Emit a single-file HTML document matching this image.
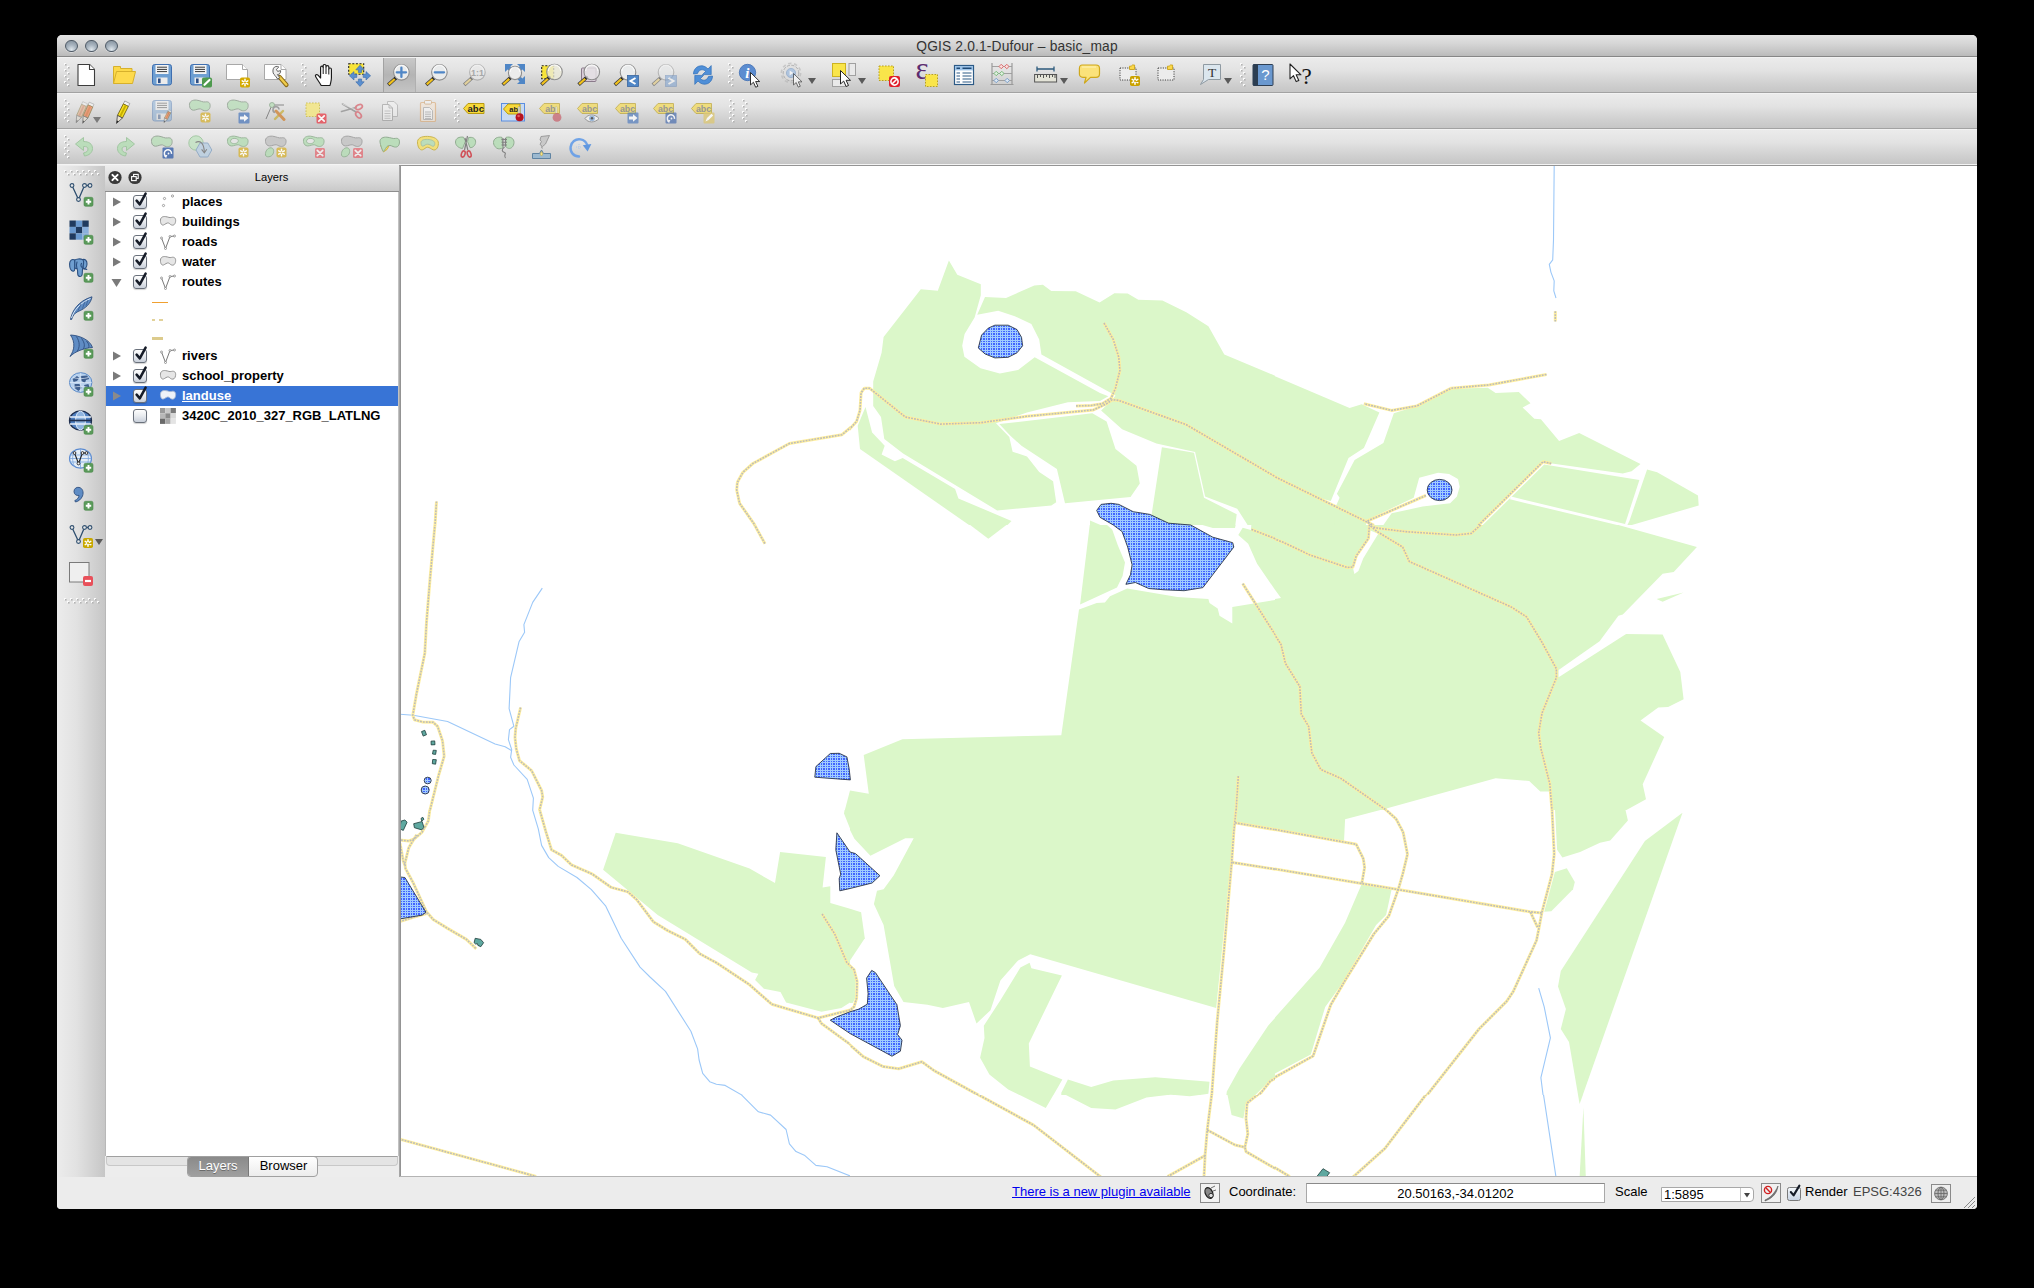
<!DOCTYPE html><html><head><meta charset="utf-8"><title>QGIS</title><style>
html,body{margin:0;padding:0;background:#000;}
body{width:2034px;height:1288px;position:relative;overflow:hidden;font-family:"Liberation Sans",sans-serif;font-size:13px;color:#000;}
#win{position:absolute;left:57px;top:35px;width:1920px;height:1174px;background:#ededed;border-radius:5px 5px 4px 4px;overflow:hidden;}
#title{position:absolute;left:0;top:0;width:1920px;height:21px;background:linear-gradient(#e4e4e4,#d6d6d6 40%,#c2c2c2 85%,#bababa);border-bottom:1px solid #868686;text-align:center;}
#title span{position:absolute;left:0;width:1920px;top:3.5px;font-size:13.8px;color:#333;letter-spacing:0.15px}
.tl{position:absolute;top:4.5px;width:10.5px;height:10.5px;border-radius:50%;border:1.2px solid #4f5a66;background:radial-gradient(circle at 50% 85%,#dfe6ec 0%,#a9b5c0 45%,#7f8c99 100%);box-shadow:0 0.5px 0.5px rgba(255,255,255,.7)}
.tb{position:absolute;left:0;width:1920px;height:34px;background:linear-gradient(#ebebeb,#e3e3e3 35%,#d0d0d0 75%,#c6c6c6);border-top:1px solid #f2f2f2;border-bottom:1px solid #a2a2a2;box-sizing:content-box}
#ltb{position:absolute;left:0;top:131px;width:48px;height:1011px;background:linear-gradient(90deg,#ececec,#e2e2e2 40%,#c6c6c6)}
#lp{position:absolute;left:48px;top:131px;width:294px;height:1011px;background:#ededed}
#lph{position:absolute;left:0;top:0px;width:294px;height:26px;background:linear-gradient(#ececec,#dcdcdc 50%,#c9c9c9);border-bottom:1px solid #8e8e8e;box-sizing:border-box}
#lph span{position:absolute;left:0;width:333px;text-align:center;top:5px;font-size:11.2px}
#ll{position:absolute;left:0;top:26px;width:294px;height:964px;background:#fff;border-left:1px solid #b8b8b8;border-right:1px solid #c2c2c2;box-sizing:border-box}
.row{position:absolute;left:0px;width:292px;height:20px;font-weight:bold;font-size:13px;line-height:20px;white-space:nowrap}
.row .t{position:absolute;left:76px;top:0}
.cb{position:absolute;left:27px;top:3px;width:12px;height:12px;border:1px solid #6a717c;border-radius:3px;background:linear-gradient(#fefefe,#e8ebef 50%,#c9d0da);box-shadow:0 1px 1px rgba(0,0,0,.18)}
#sb{position:absolute;left:0;top:1142px;width:1920px;height:32px;background:#ececec;font-size:13px}
#sb div,#sb span{position:absolute}
</style></head><body>
<div id="win">
<div id="title"><div class="tl" style="left:8px"></div><div class="tl" style="left:28px"></div><div class="tl" style="left:48px"></div><span>QGIS 2.0.1-Dufour &ndash; basic_map</span></div>
<div class="tb" style="top:22px"></div>
<div class="tb" style="top:58px"></div>
<div class="tb" style="top:94px;border-bottom-color:#f4f4f4"></div>
<svg style="position:absolute;left:7.0px;top:28.0px;overflow:visible" width="6" height="24" viewBox="0 0 6 24" ><rect x="0" y="0" width="2" height="2" fill="#fafafa"/><rect x="1" y="1" width="1.6" height="1.6" fill="#b4b4b4"/><rect x="3" y="3" width="2" height="2" fill="#fafafa"/><rect x="4" y="4" width="1.6" height="1.6" fill="#b4b4b4"/><rect x="0" y="6" width="2" height="2" fill="#fafafa"/><rect x="1" y="7" width="1.6" height="1.6" fill="#b4b4b4"/><rect x="3" y="9" width="2" height="2" fill="#fafafa"/><rect x="4" y="10" width="1.6" height="1.6" fill="#b4b4b4"/><rect x="0" y="12" width="2" height="2" fill="#fafafa"/><rect x="1" y="13" width="1.6" height="1.6" fill="#b4b4b4"/><rect x="3" y="15" width="2" height="2" fill="#fafafa"/><rect x="4" y="16" width="1.6" height="1.6" fill="#b4b4b4"/><rect x="0" y="18" width="2" height="2" fill="#fafafa"/><rect x="1" y="19" width="1.6" height="1.6" fill="#b4b4b4"/><rect x="3" y="21" width="2" height="2" fill="#fafafa"/><rect x="4" y="22" width="1.6" height="1.6" fill="#b4b4b4"/></svg>
<svg style="position:absolute;left:17.0px;top:28.0px;overflow:visible" width="24" height="24" viewBox="0 0 24 24" ><path d="M4 1.5H15.5L20.5 6.5V22.5H4Z" fill="#fff" stroke="#3c3c3c" stroke-width="1.1" stroke-linejoin="round"/><path d="M15.5 1.5V6.5H20.5" fill="#fff" stroke="#3c3c3c" stroke-width="1.1" stroke-linejoin="round"/></svg>
<svg style="position:absolute;left:55.0px;top:28.0px;overflow:visible" width="24" height="24" viewBox="0 0 24 24" ><path d="M1.5 20.5V3.5H8.5V5.5H20V8.5" fill="#fcd94a" stroke="#d6b02c" stroke-width="1"/><path d="M1.5 20.5L4.5 8.5H23.5L20.5 20.5Z" fill="#fdda4e" stroke="#d6b02c" stroke-width="1" stroke-linejoin="round"/></svg>
<svg style="position:absolute;left:93.0px;top:28.0px;overflow:visible" width="24" height="24" viewBox="0 0 24 24" ><g opacity="1"><rect x="2.5" y="1.5" width="19" height="20.5" rx="2.2" fill="#6e9fd2" stroke="#3f6fb0" stroke-width="1"/><rect x="5.5" y="2" width="13" height="9" fill="#f4f4f4"/><path d="M7 4.2H17M7 6.4H17M7 8.6H17" stroke="#3a3a3a" stroke-width="1"/><rect x="6.5" y="14.5" width="11" height="6.5" fill="#ececec"/><rect x="8" y="15.5" width="2.6" height="4.6" fill="#2d4f86"/></g></svg>
<svg style="position:absolute;left:131.0px;top:28.0px;overflow:visible" width="24" height="24" viewBox="0 0 24 24" ><g opacity="1"><rect x="2.5" y="1.5" width="19" height="20.5" rx="2.2" fill="#6e9fd2" stroke="#3f6fb0" stroke-width="1"/><rect x="5.5" y="2" width="13" height="9" fill="#f4f4f4"/><path d="M7 4.2H17M7 6.4H17M7 8.6H17" stroke="#3a3a3a" stroke-width="1"/><rect x="6.5" y="14.5" width="11" height="6.5" fill="#ececec"/><rect x="8" y="15.5" width="2.6" height="4.6" fill="#2d4f86"/></g><rect x="14" y="14.5" width="10" height="10" rx="1.8" fill="#4e9a4e"/><path d="M16.5 21.8L21.5 17" stroke="#fff" stroke-width="2.2" stroke-linecap="round"/></svg>
<svg style="position:absolute;left:169.0px;top:28.0px;overflow:visible" width="24" height="24" viewBox="0 0 24 24" ><path d="M0.5 1.5H16.5L21.5 6.5V16.5H0.5Z" fill="#fff" stroke="#a8a8a8" stroke-width="1"/><path d="M16.5 1.5V6.5H21.5" fill="#fff" stroke="#a8a8a8" stroke-width="1"/><g opacity="1"><rect x="14" y="14.5" width="10" height="10" rx="1.8" fill="#d4aa00"/><g stroke="#fff" stroke-width="1.5" stroke-linecap="round"><path d="M19 16.3V22.7M16.2 17.9L21.8 21.1M21.8 17.9L16.2 21.1"/></g><circle cx="19" cy="19.5" r="1" fill="#d4aa00"/></g></svg>
<svg style="position:absolute;left:207.0px;top:28.0px;overflow:visible" width="24" height="24" viewBox="0 0 24 24" ><path d="M0.5 1.5H17L22 6.5V16.5H0.5Z" fill="#fff" stroke="#a8a8a8" stroke-width="1"/><path d="M17 1.5V6.5H22" fill="#fff" stroke="#a8a8a8" stroke-width="1"/><path d="M15.5 14L22.5 22" stroke="#8a6a18" stroke-width="4.2" stroke-linecap="round"/><path d="M15.8 14.3L22.3 21.7" stroke="#f0cc4a" stroke-width="2.4" stroke-linecap="round"/><path d="M9.5 5.2C10.5 3.4 13 2.8 14.8 4L12.4 6.4L13.6 8.4L16.6 7.6C17 9.8 15.4 11.6 13.4 11.6L15.8 14.6L13.6 16L11 12.4C8.8 11.2 8.4 7.4 9.5 5.2Z" fill="#ececec" stroke="#555" stroke-width="0.9" stroke-linejoin="round"/></svg>
<svg style="position:absolute;left:244.0px;top:28.0px;overflow:visible" width="6" height="24" viewBox="0 0 6 24" ><rect x="0" y="0" width="2" height="2" fill="#fafafa"/><rect x="1" y="1" width="1.6" height="1.6" fill="#b4b4b4"/><rect x="3" y="3" width="2" height="2" fill="#fafafa"/><rect x="4" y="4" width="1.6" height="1.6" fill="#b4b4b4"/><rect x="0" y="6" width="2" height="2" fill="#fafafa"/><rect x="1" y="7" width="1.6" height="1.6" fill="#b4b4b4"/><rect x="3" y="9" width="2" height="2" fill="#fafafa"/><rect x="4" y="10" width="1.6" height="1.6" fill="#b4b4b4"/><rect x="0" y="12" width="2" height="2" fill="#fafafa"/><rect x="1" y="13" width="1.6" height="1.6" fill="#b4b4b4"/><rect x="3" y="15" width="2" height="2" fill="#fafafa"/><rect x="4" y="16" width="1.6" height="1.6" fill="#b4b4b4"/><rect x="0" y="18" width="2" height="2" fill="#fafafa"/><rect x="1" y="19" width="1.6" height="1.6" fill="#b4b4b4"/><rect x="3" y="21" width="2" height="2" fill="#fafafa"/><rect x="4" y="22" width="1.6" height="1.6" fill="#b4b4b4"/></svg>
<svg style="position:absolute;left:255.5px;top:28.0px;overflow:visible" width="24" height="24" viewBox="0 0 24 24" ><path d="M8.2 22.5C6.5 19.5 3.6 15.5 2.6 13.6C1.8 12 3.6 10.8 5 12.2L7.6 15V4.4C7.6 2.6 10.2 2.6 10.2 4.4V2.8C10.2 1 13 1 13 2.8V3.8C13 2.2 15.8 2.2 15.8 3.8V6C15.8 4.6 18.4 4.6 18.4 6.2V15C18.4 18 17.6 19.6 17 22.5Z" fill="#fff" stroke="#1a1a1a" stroke-width="1.15" stroke-linejoin="round"/><path d="M10.2 4.4V11M13 3.8V11M15.8 6V11.5" stroke="#1a1a1a" stroke-width="1"/></svg>
<svg style="position:absolute;left:291.0px;top:28.0px;overflow:visible" width="24" height="24" viewBox="0 0 24 24" ><rect x="0.7" y="0.7" width="15" height="10.6" fill="#f7e43a" stroke="#222" stroke-width="1.1" stroke-dasharray="2 1.6"/><g fill="#5a8fcf" stroke="#3a6aa8" stroke-width="0.6"><path d="M12 2.2L16.2 6.8H13.6V9.6H10.4V6.8H7.8Z"/><path d="M12 23.4L16.2 18.8H13.6V16H10.4V18.8H7.8Z"/><path d="M1.4 12.8L6 8.6V11.2H8.8V14.4H6V17Z"/><path d="M22.6 12.8L18 8.6V11.2H15.2V14.4H18V17Z"/></g></svg>
<div style="position:absolute;left:326px;top:23px;width:33px;height:34px;background:linear-gradient(#c9c9c9,#b4b4b4 50%,#c4c4c4);box-shadow:inset 1px 0 0 #a2a2a2,inset -1px 0 0 #b0b0b0"></div>
<svg style="position:absolute;left:330.0px;top:28.0px;overflow:visible" width="24" height="24" viewBox="0 0 24 24" ><g opacity="1"><path d="M9.384 14.516L1.184000000000001 21.916" stroke="#3a3a3a" stroke-width="3.6" stroke-linecap="butt"/><path d="M7.784000000000001 16.016000000000002L1.7840000000000007 21.416" stroke="#f2c21c" stroke-width="2.2" stroke-linecap="butt"/><circle cx="9.084000000000001" cy="14.716000000000001" r="1.7" fill="#1a1a1a"/><circle cx="14.4" cy="9.3" r="7.8" fill="#e9ebec" fill-opacity="1" stroke="#8e8e8e" stroke-width="1.1"/><path d="M8.200000000000001 8.3A6.199999999999999 6.199999999999999 0 0 1 20.599999999999998 8.3" fill="none" stroke="#fff" stroke-width="1.2" opacity=".8"/></g><path d="M14.4 4.7V13.9M9.8 9.3H19" stroke="#4f86c6" stroke-width="2.3" stroke-linecap="round"/></svg>
<svg style="position:absolute;left:368.0px;top:28.0px;overflow:visible" width="24" height="24" viewBox="0 0 24 24" ><g opacity="1"><path d="M9.384 14.516L1.184000000000001 21.916" stroke="#3a3a3a" stroke-width="3.6" stroke-linecap="butt"/><path d="M7.784000000000001 16.016000000000002L1.7840000000000007 21.416" stroke="#f2c21c" stroke-width="2.2" stroke-linecap="butt"/><circle cx="9.084000000000001" cy="14.716000000000001" r="1.7" fill="#1a1a1a"/><circle cx="14.4" cy="9.3" r="7.8" fill="#e9ebec" fill-opacity="1" stroke="#8e8e8e" stroke-width="1.1"/><path d="M8.200000000000001 8.3A6.199999999999999 6.199999999999999 0 0 1 20.599999999999998 8.3" fill="none" stroke="#fff" stroke-width="1.2" opacity=".8"/></g><path d="M9.8 9.3H19" stroke="#4f86c6" stroke-width="2.3" stroke-linecap="round"/></svg>
<svg style="position:absolute;left:406.0px;top:28.0px;overflow:visible" width="24" height="24" viewBox="0 0 24 24" ><g opacity="0.55"><path d="M9.384 14.516L1.184000000000001 21.916" stroke="#3a3a3a" stroke-width="3.6" stroke-linecap="butt"/><path d="M7.784000000000001 16.016000000000002L1.7840000000000007 21.416" stroke="#f0d070" stroke-width="2.2" stroke-linecap="butt"/><circle cx="9.084000000000001" cy="14.716000000000001" r="1.7" fill="#1a1a1a"/><circle cx="14.4" cy="9.3" r="7.8" fill="#ececec" fill-opacity="1" stroke="#8e8e8e" stroke-width="1.1"/><path d="M8.200000000000001 8.3A6.199999999999999 6.199999999999999 0 0 1 20.599999999999998 8.3" fill="none" stroke="#fff" stroke-width="1.2" opacity=".8"/></g><text x="14.4" y="12.6" text-anchor="middle" font-family="Liberation Sans" font-weight="bold" font-size="9" fill="#a8a8a8">1:1</text></svg>
<svg style="position:absolute;left:444.0px;top:28.0px;overflow:visible" width="24" height="24" viewBox="0 0 24 24" ><g fill="#4f86c6"><path d="M4 1H12L9.4 3.6L12.4 6.6L9.6 9.4L6.6 6.4L4 9Z"/><path d="M24 1V9L21.4 6.4L18.4 9.4L15.6 6.6L18.6 3.6L16 1Z"/><path d="M24 21H16L18.6 18.4L15.6 15.4L18.4 12.6L21.4 15.6L24 13Z"/></g><g opacity="1"><path d="M9.848 14.351999999999999L1.6480000000000015 21.752" stroke="#3a3a3a" stroke-width="3.6" stroke-linecap="butt"/><path d="M8.248000000000001 15.851999999999999L2.248000000000001 21.252" stroke="#f2c21c" stroke-width="2.2" stroke-linecap="butt"/><circle cx="9.548000000000002" cy="14.552" r="1.7" fill="#1a1a1a"/><circle cx="14" cy="10" r="6.6" fill="#ececec" fill-opacity="1" stroke="#8e8e8e" stroke-width="1.1"/><path d="M9.0 9A5.0 5.0 0 0 1 19.0 9" fill="none" stroke="#fff" stroke-width="1.2" opacity=".8"/></g></svg>
<svg style="position:absolute;left:482.0px;top:28.0px;overflow:visible" width="24" height="24" viewBox="0 0 24 24" ><rect x="2.7" y="2.7" width="12" height="13" fill="#f7e43a" stroke="#222" stroke-width="1.1" stroke-dasharray="2 1.6"/><g opacity="1"><path d="M10.484 14.216L2.2840000000000007 21.616" stroke="#3a3a3a" stroke-width="3.6" stroke-linecap="butt"/><path d="M8.884 15.716L2.8840000000000003 21.116" stroke="#f2c21c" stroke-width="2.2" stroke-linecap="butt"/><circle cx="10.184000000000001" cy="14.416" r="1.7" fill="#1a1a1a"/><circle cx="15.5" cy="9" r="7.8" fill="#ecead8" fill-opacity="0.78" stroke="#8e8e8e" stroke-width="1.1"/><path d="M9.3 8A6.199999999999999 6.199999999999999 0 0 1 21.7 8" fill="none" stroke="#fff" stroke-width="1.2" opacity=".8"/></g></svg>
<svg style="position:absolute;left:520.0px;top:28.0px;overflow:visible" width="24" height="24" viewBox="0 0 24 24" ><rect x="4.5" y="5" width="14.5" height="13.5" rx="1" fill="#d8ccd8" stroke="#8a7a8a" stroke-width="1"/><g opacity="1"><path d="M9.784 14.216L1.5840000000000014 21.616" stroke="#3a3a3a" stroke-width="3.6" stroke-linecap="butt"/><path d="M8.184000000000001 15.716L2.184000000000001 21.116" stroke="#f2c21c" stroke-width="2.2" stroke-linecap="butt"/><circle cx="9.484000000000002" cy="14.416" r="1.7" fill="#1a1a1a"/><circle cx="14.8" cy="9" r="7.8" fill="#e6e2e6" fill-opacity="0.8" stroke="#8e8e8e" stroke-width="1.1"/><path d="M8.600000000000001 8A6.199999999999999 6.199999999999999 0 0 1 21.0 8" fill="none" stroke="#fff" stroke-width="1.2" opacity=".8"/></g></svg>
<svg style="position:absolute;left:558.0px;top:28.0px;overflow:visible" width="24" height="24" viewBox="0 0 24 24" ><g opacity="1"><path d="M7.984 14.516L-0.2159999999999993 21.916" stroke="#3a3a3a" stroke-width="3.6" stroke-linecap="butt"/><path d="M6.384 16.016000000000002L0.38400000000000034 21.416" stroke="#f2c21c" stroke-width="2.2" stroke-linecap="butt"/><circle cx="7.684" cy="14.716000000000001" r="1.7" fill="#1a1a1a"/><circle cx="13" cy="9.3" r="7.8" fill="#e9ebec" fill-opacity="1" stroke="#8e8e8e" stroke-width="1.1"/><path d="M6.800000000000001 8.3A6.199999999999999 6.199999999999999 0 0 1 19.2 8.3" fill="none" stroke="#fff" stroke-width="1.2" opacity=".8"/></g><rect x="12.5" y="12.5" width="11" height="11" fill="#4f86c6" stroke="#3a66a0" stroke-width="0.8"/><path d="M20.5 15L15.5 18L20.5 21" fill="none" stroke="#fff" stroke-width="2"/></svg>
<svg style="position:absolute;left:596.0px;top:28.0px;overflow:visible" width="24" height="24" viewBox="0 0 24 24" ><g opacity="0.5"><path d="M7.984 14.516L-0.2159999999999993 21.916" stroke="#3a3a3a" stroke-width="3.6" stroke-linecap="butt"/><path d="M6.384 16.016000000000002L0.38400000000000034 21.416" stroke="#f0d070" stroke-width="2.2" stroke-linecap="butt"/><circle cx="7.684" cy="14.716000000000001" r="1.7" fill="#1a1a1a"/><circle cx="13" cy="9.3" r="7.8" fill="#e9ebec" fill-opacity="1" stroke="#8e8e8e" stroke-width="1.1"/><path d="M6.800000000000001 8.3A6.199999999999999 6.199999999999999 0 0 1 19.2 8.3" fill="none" stroke="#fff" stroke-width="1.2" opacity=".8"/></g><g opacity=".55"><rect x="12.5" y="12.5" width="11" height="11" fill="#7ea4d4" stroke="#6a8ab8" stroke-width="0.8"/><path d="M15.5 15L20.5 18L15.5 21" fill="none" stroke="#fff" stroke-width="2"/></g></svg>
<svg style="position:absolute;left:634.0px;top:28.0px;overflow:visible" width="24" height="24" viewBox="0 0 24 24" ><path d="M2.5 11C2.5 5 8 1.5 13 3.2C14.8 3.8 16 4.8 17 6L20.2 2.6V11.6H11.4L14.6 8.4C12.6 6 8 6 6.6 10.4Z" fill="#4f8fd8" stroke="#2f6fb8" stroke-width="0.7" stroke-linejoin="round"/><path d="M21.5 13C21.5 19 16 22.5 11 20.8C9.2 20.2 8 19.2 7 18L3.8 21.4V12.4H12.6L9.4 15.6C11.4 18 16 18 17.4 13.6Z" fill="#4f8fd8" stroke="#2f6fb8" stroke-width="0.7" stroke-linejoin="round"/></svg>
<svg style="position:absolute;left:671.0px;top:28.0px;overflow:visible" width="6" height="24" viewBox="0 0 6 24" ><rect x="0" y="0" width="2" height="2" fill="#fafafa"/><rect x="1" y="1" width="1.6" height="1.6" fill="#b4b4b4"/><rect x="3" y="3" width="2" height="2" fill="#fafafa"/><rect x="4" y="4" width="1.6" height="1.6" fill="#b4b4b4"/><rect x="0" y="6" width="2" height="2" fill="#fafafa"/><rect x="1" y="7" width="1.6" height="1.6" fill="#b4b4b4"/><rect x="3" y="9" width="2" height="2" fill="#fafafa"/><rect x="4" y="10" width="1.6" height="1.6" fill="#b4b4b4"/><rect x="0" y="12" width="2" height="2" fill="#fafafa"/><rect x="1" y="13" width="1.6" height="1.6" fill="#b4b4b4"/><rect x="3" y="15" width="2" height="2" fill="#fafafa"/><rect x="4" y="16" width="1.6" height="1.6" fill="#b4b4b4"/><rect x="0" y="18" width="2" height="2" fill="#fafafa"/><rect x="1" y="19" width="1.6" height="1.6" fill="#b4b4b4"/><rect x="3" y="21" width="2" height="2" fill="#fafafa"/><rect x="4" y="22" width="1.6" height="1.6" fill="#b4b4b4"/></svg>
<svg style="position:absolute;left:681.0px;top:28.0px;overflow:visible" width="24" height="24" viewBox="0 0 24 24" ><circle cx="9.5" cy="9.5" r="8.2" fill="#5b8cd0" stroke="#3f6fb4" stroke-width="0.8"/><text x="9.3" y="14.6" text-anchor="middle" font-family="Liberation Serif" font-style="italic" font-weight="bold" font-size="15" fill="#fff">i</text><path transform="translate(12.5,9.5) scale(0.92)" d="M0 0V13.5L3.2 10.6L5.6 16L8 15L5.6 9.8H10Z" fill="#fff" stroke="#222" stroke-width="1" stroke-linejoin="round"/></svg>
<svg style="position:absolute;left:724.0px;top:28.0px;overflow:visible" width="24" height="24" viewBox="0 0 24 24" ><g opacity=".6"><circle cx="10" cy="10" r="7.8" fill="#dedede" stroke="#8c8c8c" stroke-width="1" stroke-dasharray="3.2 1.4"/><circle cx="10" cy="10" r="9.6" fill="none" stroke="#b5b5b5" stroke-width="1.6" stroke-dasharray="3.4 2.6"/><circle cx="10" cy="10" r="4.6" fill="#8fb3de" stroke="#6a8fc0" stroke-width="0.8"/><path d="M8.6 7.6L12.4 10L8.6 12.4Z" fill="#fff"/></g><g opacity=".7"><path transform="translate(12.5,10.5) scale(0.85)" d="M0 0V13.5L3.2 10.6L5.6 16L8 15L5.6 9.8H10Z" fill="#fff" stroke="#222" stroke-width="1" stroke-linejoin="round"/></g></svg>
<svg style="position:absolute;left:751.0px;top:43.0px;overflow:visible" width="8" height="6" viewBox="0 0 8 6" ><path d="M0 0H8L4 6Z" fill="#5a5a5a"/></svg>
<svg style="position:absolute;left:775.0px;top:28.0px;overflow:visible" width="24" height="24" viewBox="0 0 24 24" ><rect x="0.5" y="16.5" width="13" height="7" fill="#e9e9e9" stroke="#a0a0a0" stroke-width="1"/><rect x="17" y="0.5" width="6.5" height="12" fill="#e9e9e9" stroke="#a0a0a0" stroke-width="1"/><rect x="0.5" y="0.5" width="13" height="13" fill="#f9e54a" stroke="#cdb320" stroke-width="1"/><path transform="translate(8.5,7.5) scale(1.0)" d="M0 0V13.5L3.2 10.6L5.6 16L8 15L5.6 9.8H10Z" fill="#fff" stroke="#222" stroke-width="1" stroke-linejoin="round"/></svg>
<svg style="position:absolute;left:801.0px;top:43.0px;overflow:visible" width="8" height="6" viewBox="0 0 8 6" ><path d="M0 0H8L4 6Z" fill="#5a5a5a"/></svg>
<svg style="position:absolute;left:820.0px;top:28.0px;overflow:visible" width="24" height="24" viewBox="0 0 24 24" ><rect x="2" y="3" width="14.5" height="14.5" fill="#f9e54a" stroke="#b8a020" stroke-width="1" stroke-dasharray="1.6 1.4"/><rect x="12" y="13" width="11" height="11" rx="2" fill="#e0202c"/><circle cx="17.5" cy="18.5" r="3.6" fill="none" stroke="#fff" stroke-width="1.6"/><path d="M15 21L20 16" stroke="#fff" stroke-width="1.6"/></svg>
<svg style="position:absolute;left:858.0px;top:28.0px;overflow:visible" width="24" height="24" viewBox="0 0 24 24" ><text x="7" y="15.8" text-anchor="middle" font-family="Liberation Serif" font-size="31" fill="#5c2d70">&#949;</text><rect x="10.5" y="11.5" width="12" height="12" fill="#f9e54a" stroke="#b8a020" stroke-width="1" stroke-dasharray="1.6 1.4"/></svg>
<svg style="position:absolute;left:895.0px;top:28.0px;overflow:visible" width="24" height="24" viewBox="0 0 24 24" ><rect x="2.5" y="2.5" width="19" height="19" fill="#fff" stroke="#2c5a86" stroke-width="1.2"/><rect x="3" y="3" width="18" height="4.4" fill="#9dc3e8"/><path d="M4.5 5.2H8M10.5 5.2H19.5" stroke="#1f4a76" stroke-width="1.5"/><path d="M4.5 10H8M10.5 10H19.5M4.5 13H8M10.5 13H19.5M4.5 16H8M10.5 16H19.5M4.5 19H8M10.5 19H19.5" stroke="#2c5a86" stroke-width="1.1"/></svg>
<svg style="position:absolute;left:933.0px;top:27.0px;overflow:visible" width="24" height="24" viewBox="0 0 24 24" ><path d="M2 1V22M22 1V22M0.5 22.5H23.5" stroke="#9a9a9a" stroke-width="1.2" fill="none"/><path d="M2 4.5H22M2 11.5H22M2 18.5H22" stroke="#9a9a9a" stroke-width="0.9"/><g stroke-width="1" fill="#fbe0e0" stroke="#d86a6a"><path d="M9 4.5L11.2 2.3L13.4 4.5L11.2 6.7Z"/><path d="M14.6 4.5L16.8 2.3L19 4.5L16.8 6.7Z"/></g><g stroke-width="1" fill="#dff0df" stroke="#7ab87a"><path d="M4 11.5L6.2 9.3L8.4 11.5L6.2 13.7Z"/><path d="M9.6 11.5L11.8 9.3L14 11.5L11.8 13.7Z"/></g><g stroke-width="1" fill="#dde8f4" stroke="#7a9ec8"><path d="M4 18.5L6.2 16.3L8.4 18.5L6.2 20.7Z"/><path d="M15 18.5L17.2 16.3L19.4 18.5L17.2 20.7Z"/></g></svg>
<svg style="position:absolute;left:977.0px;top:28.0px;overflow:visible" width="24" height="24" viewBox="0 0 24 24" ><path d="M3 3.5V8.5M20 3.5V8.5M3 6H20" stroke="#2c5a7c" stroke-width="1.3" fill="none"/><rect x="0.6" y="11.5" width="22" height="7.5" fill="#e4e4d8" stroke="#555" stroke-width="1"/><path d="M3.5 12V15M6.5 12V14M9.5 12V15M12.5 12V14M15.5 12V15M18.5 12V14M21 12V15" stroke="#444" stroke-width="0.9"/></svg>
<svg style="position:absolute;left:1003.0px;top:43.0px;overflow:visible" width="8" height="6" viewBox="0 0 8 6" ><path d="M0 0H8L4 6Z" fill="#5a5a5a"/></svg>
<svg style="position:absolute;left:1021.0px;top:28.0px;overflow:visible" width="24" height="24" viewBox="0 0 24 24" ><path d="M4 2H18C20 2 21.5 3.4 21.5 5.4V11C21.5 13 20 14.4 18 14.4H12.5L6.5 20L8 14.4H4.8C2.8 14.4 1.4 13 1.4 11V5.4C1.4 3.4 2.8 2 4 2Z" fill="#fbe27a" stroke="#cfa81c" stroke-width="1.2" stroke-linejoin="round"/><path d="M4 4H18" stroke="#fff4b8" stroke-width="1.2"/></svg>
<svg style="position:absolute;left:1061.5px;top:28.0px;overflow:visible" width="24" height="24" viewBox="0 0 24 24" ><rect x="1" y="5" width="16" height="12" fill="#ececec" stroke="#3a3a3a" stroke-width="1" stroke-dasharray="1.1 1.3"/><path d="M10.5 6.5V3.2H12.2L13.4 2H15.6V6.5Z" fill="#fbd84a" stroke="#c8a218" stroke-width="0.9"/><g opacity="1"><rect x="11" y="13" width="10" height="10" rx="1.8" fill="#caa200"/><g stroke="#fff" stroke-width="1.5" stroke-linecap="round"><path d="M16 14.8V21.2M13.2 16.4L18.8 19.6M18.8 16.4L13.2 19.6"/></g><circle cx="16" cy="18" r="1" fill="#caa200"/></g></svg>
<svg style="position:absolute;left:1099.5px;top:28.0px;overflow:visible" width="24" height="24" viewBox="0 0 24 24" ><rect x="1" y="5" width="16" height="12" fill="#ececec" stroke="#3a3a3a" stroke-width="1" stroke-dasharray="1.1 1.3"/><path d="M10.5 6.5V3.2H12.2L13.4 2H15.6V6.5Z" fill="#fbd84a" stroke="#c8a218" stroke-width="0.9"/></svg>
<svg style="position:absolute;left:1142.0px;top:28.0px;overflow:visible" width="24" height="24" viewBox="0 0 24 24" ><path d="M4.5 1.5H21.5V16.5H9.5L1.5 21.5L4.5 16.5Z" fill="#dbe6ee" stroke="#8f9aa2" stroke-width="1" stroke-linejoin="round"/><text x="13" y="13.5" text-anchor="middle" font-family="Liberation Serif" font-size="13.5" fill="#333">T</text></svg>
<svg style="position:absolute;left:1167.0px;top:43.0px;overflow:visible" width="8" height="6" viewBox="0 0 8 6" ><path d="M0 0H8L4 6Z" fill="#5a5a5a"/></svg>
<svg style="position:absolute;left:1183.0px;top:28.0px;overflow:visible" width="6" height="24" viewBox="0 0 6 24" ><rect x="0" y="0" width="2" height="2" fill="#fafafa"/><rect x="1" y="1" width="1.6" height="1.6" fill="#b4b4b4"/><rect x="3" y="3" width="2" height="2" fill="#fafafa"/><rect x="4" y="4" width="1.6" height="1.6" fill="#b4b4b4"/><rect x="0" y="6" width="2" height="2" fill="#fafafa"/><rect x="1" y="7" width="1.6" height="1.6" fill="#b4b4b4"/><rect x="3" y="9" width="2" height="2" fill="#fafafa"/><rect x="4" y="10" width="1.6" height="1.6" fill="#b4b4b4"/><rect x="0" y="12" width="2" height="2" fill="#fafafa"/><rect x="1" y="13" width="1.6" height="1.6" fill="#b4b4b4"/><rect x="3" y="15" width="2" height="2" fill="#fafafa"/><rect x="4" y="16" width="1.6" height="1.6" fill="#b4b4b4"/><rect x="0" y="18" width="2" height="2" fill="#fafafa"/><rect x="1" y="19" width="1.6" height="1.6" fill="#b4b4b4"/><rect x="3" y="21" width="2" height="2" fill="#fafafa"/><rect x="4" y="22" width="1.6" height="1.6" fill="#b4b4b4"/></svg>
<svg style="position:absolute;left:1194.0px;top:28.0px;overflow:visible" width="24" height="24" viewBox="0 0 24 24" ><rect x="2" y="1.5" width="20" height="21" rx="1" fill="#6a98cf" stroke="#2e3e52" stroke-width="1"/><rect x="2" y="1.5" width="5" height="21" fill="#2c3e52"/><text x="14.5" y="17" text-anchor="middle" font-family="Liberation Sans" font-size="15" fill="#fff">?</text></svg>
<svg style="position:absolute;left:1232.0px;top:28.0px;overflow:visible" width="24" height="24" viewBox="0 0 24 24" ><path transform="translate(1,1) scale(1.1)" d="M0 0V13.5L3.2 10.6L5.6 16L8 15L5.6 9.8H10Z" fill="#fff" stroke="#222" stroke-width="1" stroke-linejoin="round"/><text x="17.5" y="21" text-anchor="middle" font-family="Liberation Serif" font-size="23" fill="#111">?</text></svg>
<svg style="position:absolute;left:7.0px;top:64.0px;overflow:visible" width="6" height="24" viewBox="0 0 6 24" ><rect x="0" y="0" width="2" height="2" fill="#fafafa"/><rect x="1" y="1" width="1.6" height="1.6" fill="#b4b4b4"/><rect x="3" y="3" width="2" height="2" fill="#fafafa"/><rect x="4" y="4" width="1.6" height="1.6" fill="#b4b4b4"/><rect x="0" y="6" width="2" height="2" fill="#fafafa"/><rect x="1" y="7" width="1.6" height="1.6" fill="#b4b4b4"/><rect x="3" y="9" width="2" height="2" fill="#fafafa"/><rect x="4" y="10" width="1.6" height="1.6" fill="#b4b4b4"/><rect x="0" y="12" width="2" height="2" fill="#fafafa"/><rect x="1" y="13" width="1.6" height="1.6" fill="#b4b4b4"/><rect x="3" y="15" width="2" height="2" fill="#fafafa"/><rect x="4" y="16" width="1.6" height="1.6" fill="#b4b4b4"/><rect x="0" y="18" width="2" height="2" fill="#fafafa"/><rect x="1" y="19" width="1.6" height="1.6" fill="#b4b4b4"/><rect x="3" y="21" width="2" height="2" fill="#fafafa"/><rect x="4" y="22" width="1.6" height="1.6" fill="#b4b4b4"/></svg>
<svg style="position:absolute;left:17.0px;top:64.0px;overflow:visible" width="24" height="24" viewBox="0 0 24 24" ><g transform="translate(3,22) rotate(24) scale(1.0)" opacity="0.45"><rect x="-2.6" y="-20" width="5.2" height="3" fill="#f4f4f4" stroke="#8a8a8a" stroke-width="0.6"/><rect x="-2.6" y="-17" width="5.2" height="12" fill="#e8a070" stroke="#6a5a10" stroke-width="0.7"/><rect x="-0.9" y="-17" width="1.8" height="12" fill="#d07040"/><path d="M-2.6 -5L0 2L2.6 -5Z" fill="#e8e0d0" stroke="#4a4a4a" stroke-width="0.7"/><path d="M-0.9 -0.6L0 2L0.9 -0.6Z" fill="#222"/></g><g transform="translate(9.5,22.5) rotate(24) scale(1.0)" opacity="0.65"><rect x="-2.6" y="-20" width="5.2" height="3" fill="#f4f4f4" stroke="#8a8a8a" stroke-width="0.6"/><rect x="-2.6" y="-17" width="5.2" height="12" fill="#f08050" stroke="#6a5a10" stroke-width="0.7"/><rect x="-0.9" y="-17" width="1.8" height="12" fill="#e06a2a"/><path d="M-2.6 -5L0 2L2.6 -5Z" fill="#e8e0d0" stroke="#4a4a4a" stroke-width="0.7"/><path d="M-0.9 -0.6L0 2L0.9 -0.6Z" fill="#222"/></g></svg>
<svg style="position:absolute;left:35.5px;top:81.5px;overflow:visible" width="8" height="6" viewBox="0 0 8 6" ><path d="M0 0H8L4 6Z" fill="#7a7a7a"/></svg>
<svg style="position:absolute;left:55.0px;top:64.0px;overflow:visible" width="24" height="24" viewBox="0 0 24 24" ><g transform="translate(5.5,22.5) rotate(27) scale(1.08)" opacity="1"><rect x="-2.6" y="-20" width="5.2" height="3" fill="#f4f4f4" stroke="#8a8a8a" stroke-width="0.6"/><rect x="-2.6" y="-17" width="5.2" height="12" fill="#f6e020" stroke="#6a5a10" stroke-width="0.7"/><rect x="-0.9" y="-17" width="1.8" height="12" fill="#c8b000"/><path d="M-2.6 -5L0 2L2.6 -5Z" fill="#e8e0d0" stroke="#4a4a4a" stroke-width="0.7"/><path d="M-0.9 -0.6L0 2L0.9 -0.6Z" fill="#222"/></g></svg>
<svg style="position:absolute;left:93.0px;top:64.0px;overflow:visible" width="24" height="24" viewBox="0 0 24 24" ><g opacity=".42"><g opacity="1"><rect x="2.5" y="1.5" width="19" height="20.5" rx="2.2" fill="#6e9fd2" stroke="#3f6fb0" stroke-width="1"/><rect x="5.5" y="2" width="13" height="9" fill="#f4f4f4"/><path d="M7 4.2H17M7 6.4H17M7 8.6H17" stroke="#3a3a3a" stroke-width="1"/><rect x="6.5" y="14.5" width="11" height="6.5" fill="#ececec"/><rect x="8" y="15.5" width="2.6" height="4.6" fill="#2d4f86"/></g></g><g transform="translate(14.5,22.5) rotate(27) scale(0.62)" opacity="0.7"><rect x="-2.6" y="-20" width="5.2" height="3" fill="#f4f4f4" stroke="#8a8a8a" stroke-width="0.6"/><rect x="-2.6" y="-17" width="5.2" height="12" fill="#f09060" stroke="#6a5a10" stroke-width="0.7"/><rect x="-0.9" y="-17" width="1.8" height="12" fill="#e07030"/><path d="M-2.6 -5L0 2L2.6 -5Z" fill="#e8e0d0" stroke="#4a4a4a" stroke-width="0.7"/><path d="M-0.9 -0.6L0 2L0.9 -0.6Z" fill="#222"/></g></svg>
<svg style="position:absolute;left:131.0px;top:64.0px;overflow:visible" width="24" height="24" viewBox="0 0 24 24" ><path transform="translate(0.5,0.5)" d="M1 6C0.5 2 4 0.2 8 0.6C12 1 14 3 17 2.4C20.5 1.8 22 4 21.6 7C21.2 10.4 18.5 11.6 16 11.2C13.5 10.8 13 9 10.5 9.4C8 9.8 5.5 11.4 3.5 10.4C1.6 9.5 1.2 8 1 6Z" fill="#b7ddb7" stroke="#8a9a8a" stroke-width="1" opacity="0.75"/><g opacity="0.85"><rect x="12.5" y="13.5" width="10" height="10" rx="1.8" fill="#d8b84a"/><g stroke="#fff" stroke-width="1.5" stroke-linecap="round"><path d="M17.5 15.3V21.7M14.7 16.9L20.3 20.1M20.3 16.9L14.7 20.1"/></g><circle cx="17.5" cy="18.5" r="1" fill="#d8b84a"/></g></svg>
<svg style="position:absolute;left:169.0px;top:64.0px;overflow:visible" width="24" height="24" viewBox="0 0 24 24" ><path transform="translate(0.5,0.5)" d="M1 6C0.5 2 4 0.2 8 0.6C12 1 14 3 17 2.4C20.5 1.8 22 4 21.6 7C21.2 10.4 18.5 11.6 16 11.2C13.5 10.8 13 9 10.5 9.4C8 9.8 5.5 11.4 3.5 10.4C1.6 9.5 1.2 8 1 6Z" fill="#b7ddb7" stroke="#8a9a8a" stroke-width="1" opacity="0.75"/><g opacity="0.8"><rect x="12.5" y="13.5" width="11" height="11" rx="1" fill="#5b83c0"/><path d="M14.0 17.5H18.0V15.3L22.5 19.0L18.0 22.7V20.5H14.0Z" fill="#fff"/></g></svg>
<svg style="position:absolute;left:207.0px;top:64.0px;overflow:visible" width="24" height="24" viewBox="0 0 24 24" ><g opacity=".75"><path d="M2 20L8 6H20" fill="none" stroke="#6a6a6a" stroke-width="1"/><circle cx="8" cy="6" r="2.5" fill="#b7ddb7" stroke="#7a9a7a" stroke-width="0.8"/><path d="M11 20L19 12" stroke="#c8b040" stroke-width="2.4" stroke-linecap="round"/><path d="M12 12L20 20.5" stroke="#d08030" stroke-width="3" stroke-linecap="round"/><path d="M11 13.5A3 3 0 1 1 15 10.5" fill="none" stroke="#8a8a8a" stroke-width="1.6"/></g></svg>
<svg style="position:absolute;left:246.5px;top:64.7px;overflow:visible" width="24" height="24" viewBox="0 0 24 24" ><rect x="2" y="3" width="13.5" height="13.5" fill="#f3e78a" stroke="#cdbf50" stroke-width="1" stroke-dasharray="1.6 1.4" opacity=".9"/><g opacity="0.85"><rect x="12.5" y="13.5" width="10" height="10" rx="1.5" fill="#e8505a"/><path d="M14.8 15.8L20.2 21.2M20.2 15.8L14.8 21.2" stroke="#fff" stroke-width="1.7" stroke-linecap="round"/></g></svg>
<svg style="position:absolute;left:283.0px;top:64.0px;overflow:visible" width="24" height="24" viewBox="0 0 24 24" ><g opacity=".7"><path d="M2.5 5L16 13M1.5 12.5L16 8.5" stroke="#8a8a8a" stroke-width="1.6" stroke-linecap="round"/><path d="M2.5 5L14 10" stroke="#e6e6e6" stroke-width="0.7"/><ellipse cx="19" cy="8" rx="3.6" ry="2.2" transform="rotate(-28 19 8)" fill="none" stroke="#d8606a" stroke-width="1.7"/><ellipse cx="18.5" cy="16" rx="3.4" ry="2.2" transform="rotate(48 18.5 16)" fill="none" stroke="#d8606a" stroke-width="1.7"/></g></svg>
<svg style="position:absolute;left:321.0px;top:64.0px;overflow:visible" width="24" height="24" viewBox="0 0 24 24" ><g opacity=".5"><path d="M9.5 2.5H16L19.5 6V17.5H9.5Z" fill="#f6f6f6" stroke="#9a9a9a" stroke-width="1"/><path d="M4.5 5.5H11L14.5 9V21.5H4.5Z" fill="#f8f8f8" stroke="#8a8a8a" stroke-width="1"/><path d="M11 5.5V9H14.5" fill="none" stroke="#8a8a8a" stroke-width="0.9"/><path d="M6.5 12H12.5M6.5 14.5H12.5M6.5 17H12.5M6.5 19.3H12.5" stroke="#aaa" stroke-width="1"/></g></svg>
<svg style="position:absolute;left:359.0px;top:64.0px;overflow:visible" width="24" height="24" viewBox="0 0 24 24" ><g opacity=".6"><rect x="4.5" y="3.5" width="15" height="19" rx="1" fill="#f4e6d6" stroke="#dca870" stroke-width="1.2"/><rect x="8.5" y="1.5" width="7" height="3.6" rx="1" fill="#f4f4f4" stroke="#c89860" stroke-width="0.9"/><path d="M7.5 8.5H13.5L16.5 11.5V20.5H7.5Z" fill="#fafafa" stroke="#9a9a9a" stroke-width="0.9"/><path d="M9 13H15M9 15.2H15M9 17.4H15M9 19.4H15" stroke="#999" stroke-width="0.9"/></g></svg>
<svg style="position:absolute;left:397.0px;top:64.0px;overflow:visible" width="6" height="24" viewBox="0 0 6 24" ><rect x="0" y="0" width="2" height="2" fill="#fafafa"/><rect x="1" y="1" width="1.6" height="1.6" fill="#b4b4b4"/><rect x="3" y="3" width="2" height="2" fill="#fafafa"/><rect x="4" y="4" width="1.6" height="1.6" fill="#b4b4b4"/><rect x="0" y="6" width="2" height="2" fill="#fafafa"/><rect x="1" y="7" width="1.6" height="1.6" fill="#b4b4b4"/><rect x="3" y="9" width="2" height="2" fill="#fafafa"/><rect x="4" y="10" width="1.6" height="1.6" fill="#b4b4b4"/><rect x="0" y="12" width="2" height="2" fill="#fafafa"/><rect x="1" y="13" width="1.6" height="1.6" fill="#b4b4b4"/><rect x="3" y="15" width="2" height="2" fill="#fafafa"/><rect x="4" y="16" width="1.6" height="1.6" fill="#b4b4b4"/><rect x="0" y="18" width="2" height="2" fill="#fafafa"/><rect x="1" y="19" width="1.6" height="1.6" fill="#b4b4b4"/><rect x="3" y="21" width="2" height="2" fill="#fafafa"/><rect x="4" y="22" width="1.6" height="1.6" fill="#b4b4b4"/></svg>
<svg style="position:absolute;left:405.0px;top:64.0px;overflow:visible" width="24" height="24" viewBox="0 0 24 24" ><g opacity="1"><path d="M1.5 9.5L6.0 4.5H22.0V14.5H6.0Z" fill="#f7d93a" stroke="#b89a10" stroke-width="1" stroke-linejoin="round"/><text x="13.75" y="12.7" text-anchor="middle" font-family="Liberation Sans" font-weight="bold" font-size="9.5" fill="#222">abc</text></g></svg>
<svg style="position:absolute;left:444.0px;top:64.0px;overflow:visible" width="24" height="24" viewBox="0 0 24 24" ><rect x="0.5" y="4.5" width="23" height="17.5" fill="#c8daf2" stroke="#5a8ee0" stroke-width="1"/><g opacity="1"><path d="M2.5 10L7.0 5H19.0V15H7.0Z" fill="#f7d93a" stroke="#b89a10" stroke-width="1" stroke-linejoin="round"/><text x="12.75" y="13.2" text-anchor="middle" font-family="Liberation Sans" font-weight="bold" font-size="7.5" fill="#222">ab</text></g><path d="M17.2 8.6C17.2 7 18.8 7 18.8 8.6V15H17.2Z" fill="#f4f4f4" stroke="#888" stroke-width="0.5"/><circle cx="18.6" cy="18.2" r="4" fill="#b81420"/><circle cx="17.6" cy="17" r="1.3" fill="#e05a60"/></svg>
<svg style="position:absolute;left:482.0px;top:64.0px;overflow:visible" width="24" height="24" viewBox="0 0 24 24" ><g opacity="0.6"><path d="M0.5 9.5L5.0 4.5H20.5V14.5H5.0Z" fill="#f7d93a" stroke="#b89a10" stroke-width="1" stroke-linejoin="round"/><text x="12.5" y="12.7" text-anchor="middle" font-family="Liberation Sans" font-weight="bold" font-size="8.8" fill="#666">ab&#160;</text></g><g opacity=".7"><path d="M16.4 8.6C16.4 7 18 7 18 8.6V15H16.4Z" fill="#f4f4f4" stroke="#999" stroke-width="0.5"/><circle cx="18" cy="18.4" r="4.4" fill="#c8606a"/></g></svg>
<svg style="position:absolute;left:520.0px;top:64.0px;overflow:visible" width="24" height="24" viewBox="0 0 24 24" ><g opacity="0.6"><path d="M0.5 9.5L5.0 4.5H20.5V14.5H5.0Z" fill="#f7d93a" stroke="#b89a10" stroke-width="1" stroke-linejoin="round"/><text x="12.5" y="12.7" text-anchor="middle" font-family="Liberation Sans" font-weight="bold" font-size="8.8" fill="#666">abc</text></g><g opacity=".75"><path d="M8 19.5C11 14.8 18 14.8 22 19.5C18 24 11 24 8 19.5Z" fill="#f8f8f8" stroke="#777" stroke-width="0.9"/><circle cx="15" cy="19.3" r="2.9" fill="#8ab0dc"/><circle cx="15" cy="19.3" r="1.2" fill="#333"/></g></svg>
<svg style="position:absolute;left:558.0px;top:64.0px;overflow:visible" width="24" height="24" viewBox="0 0 24 24" ><g opacity="0.6"><path d="M0.5 9.5L5.0 4.5H20.5V14.5H5.0Z" fill="#f7d93a" stroke="#b89a10" stroke-width="1" stroke-linejoin="round"/><text x="12.5" y="12.7" text-anchor="middle" font-family="Liberation Sans" font-weight="bold" font-size="8.8" fill="#666">abc</text></g><g opacity="0.75"><rect x="12.5" y="13.5" width="11" height="11" rx="1" fill="#5b83c0"/><path d="M14.0 17.5H18.0V15.3L22.5 19.0L18.0 22.7V20.5H14.0Z" fill="#fff"/></g></svg>
<svg style="position:absolute;left:596.0px;top:64.0px;overflow:visible" width="24" height="24" viewBox="0 0 24 24" ><g opacity="0.6"><path d="M0.5 9.5L5.0 4.5H20.5V14.5H5.0Z" fill="#f7d93a" stroke="#b89a10" stroke-width="1" stroke-linejoin="round"/><text x="12.5" y="12.7" text-anchor="middle" font-family="Liberation Sans" font-weight="bold" font-size="8.8" fill="#666">abc</text></g><g opacity="0.7"><rect x="12.5" y="13.5" width="11" height="11" rx="1" fill="#4b6fb0"/><path d="M15.5 22.0A3.6 3.6 0 1 1 21.5 19.8" fill="none" stroke="#fff" stroke-width="1.5"/><path d="M13.7 21.8L17.5 20.7L16.1 23.9Z" fill="#fff"/><circle cx="18.5" cy="19.5" r="0.9" fill="#fff"/></g></svg>
<svg style="position:absolute;left:634.0px;top:64.0px;overflow:visible" width="24" height="24" viewBox="0 0 24 24" ><g opacity="0.6"><path d="M0.5 9.5L5.0 4.5H20.5V14.5H5.0Z" fill="#f7d93a" stroke="#b89a10" stroke-width="1" stroke-linejoin="round"/><text x="12.5" y="12.7" text-anchor="middle" font-family="Liberation Sans" font-weight="bold" font-size="8.8" fill="#666">abc</text></g><g opacity=".8"><rect x="12.5" y="13.5" width="11" height="11" rx="1" fill="#dcc878"/><path d="M14.5 22.5L16 19L20.5 14.8L22.2 16.4L17.6 21Z" fill="#fff"/></g></svg>
<svg style="position:absolute;left:672.0px;top:64.0px;overflow:visible" width="6" height="24" viewBox="0 0 6 24" ><rect x="0" y="0" width="2" height="2" fill="#fafafa"/><rect x="1" y="1" width="1.6" height="1.6" fill="#b4b4b4"/><rect x="3" y="3" width="2" height="2" fill="#fafafa"/><rect x="4" y="4" width="1.6" height="1.6" fill="#b4b4b4"/><rect x="0" y="6" width="2" height="2" fill="#fafafa"/><rect x="1" y="7" width="1.6" height="1.6" fill="#b4b4b4"/><rect x="3" y="9" width="2" height="2" fill="#fafafa"/><rect x="4" y="10" width="1.6" height="1.6" fill="#b4b4b4"/><rect x="0" y="12" width="2" height="2" fill="#fafafa"/><rect x="1" y="13" width="1.6" height="1.6" fill="#b4b4b4"/><rect x="3" y="15" width="2" height="2" fill="#fafafa"/><rect x="4" y="16" width="1.6" height="1.6" fill="#b4b4b4"/><rect x="0" y="18" width="2" height="2" fill="#fafafa"/><rect x="1" y="19" width="1.6" height="1.6" fill="#b4b4b4"/><rect x="3" y="21" width="2" height="2" fill="#fafafa"/><rect x="4" y="22" width="1.6" height="1.6" fill="#b4b4b4"/></svg>
<svg style="position:absolute;left:685.0px;top:64.0px;overflow:visible" width="6" height="24" viewBox="0 0 6 24" ><rect x="0" y="0" width="2" height="2" fill="#fafafa"/><rect x="1" y="1" width="1.6" height="1.6" fill="#b4b4b4"/><rect x="3" y="3" width="2" height="2" fill="#fafafa"/><rect x="4" y="4" width="1.6" height="1.6" fill="#b4b4b4"/><rect x="0" y="6" width="2" height="2" fill="#fafafa"/><rect x="1" y="7" width="1.6" height="1.6" fill="#b4b4b4"/><rect x="3" y="9" width="2" height="2" fill="#fafafa"/><rect x="4" y="10" width="1.6" height="1.6" fill="#b4b4b4"/><rect x="0" y="12" width="2" height="2" fill="#fafafa"/><rect x="1" y="13" width="1.6" height="1.6" fill="#b4b4b4"/><rect x="3" y="15" width="2" height="2" fill="#fafafa"/><rect x="4" y="16" width="1.6" height="1.6" fill="#b4b4b4"/><rect x="0" y="18" width="2" height="2" fill="#fafafa"/><rect x="1" y="19" width="1.6" height="1.6" fill="#b4b4b4"/><rect x="3" y="21" width="2" height="2" fill="#fafafa"/><rect x="4" y="22" width="1.6" height="1.6" fill="#b4b4b4"/></svg>
<svg style="position:absolute;left:7.0px;top:100.0px;overflow:visible" width="6" height="24" viewBox="0 0 6 24" ><rect x="0" y="0" width="2" height="2" fill="#fafafa"/><rect x="1" y="1" width="1.6" height="1.6" fill="#b4b4b4"/><rect x="3" y="3" width="2" height="2" fill="#fafafa"/><rect x="4" y="4" width="1.6" height="1.6" fill="#b4b4b4"/><rect x="0" y="6" width="2" height="2" fill="#fafafa"/><rect x="1" y="7" width="1.6" height="1.6" fill="#b4b4b4"/><rect x="3" y="9" width="2" height="2" fill="#fafafa"/><rect x="4" y="10" width="1.6" height="1.6" fill="#b4b4b4"/><rect x="0" y="12" width="2" height="2" fill="#fafafa"/><rect x="1" y="13" width="1.6" height="1.6" fill="#b4b4b4"/><rect x="3" y="15" width="2" height="2" fill="#fafafa"/><rect x="4" y="16" width="1.6" height="1.6" fill="#b4b4b4"/><rect x="0" y="18" width="2" height="2" fill="#fafafa"/><rect x="1" y="19" width="1.6" height="1.6" fill="#b4b4b4"/><rect x="3" y="21" width="2" height="2" fill="#fafafa"/><rect x="4" y="22" width="1.6" height="1.6" fill="#b4b4b4"/></svg>
<svg style="position:absolute;left:17.0px;top:100.0px;overflow:visible" width="24" height="24" viewBox="0 0 24 24" ><g opacity=".9"><path d="M1.5 9L9.5 2.5V6.5C15 6.5 18.5 9 18.5 13.5C18.5 17.5 15 20.5 10.5 21L9.5 18C12.5 17.5 14 16 14 14C14 12 12.5 11.5 9.5 11.5V15.5Z" fill="#b7ddb7" stroke="#9cc49c" stroke-width="1" stroke-linejoin="round"/></g></svg>
<svg style="position:absolute;left:55.0px;top:100.0px;overflow:visible" width="24" height="24" viewBox="0 0 24 24" ><g opacity=".9" transform="translate(24,0) scale(-1,1)"><path d="M1.5 9L9.5 2.5V6.5C15 6.5 18.5 9 18.5 13.5C18.5 17.5 15 20.5 10.5 21L9.5 18C12.5 17.5 14 16 14 14C14 12 12.5 11.5 9.5 11.5V15.5Z" fill="#b7ddb7" stroke="#9cc49c" stroke-width="1" stroke-linejoin="round"/></g></svg>
<svg style="position:absolute;left:93.0px;top:100.0px;overflow:visible" width="24" height="24" viewBox="0 0 24 24" ><path transform="translate(0.5,0.5)" d="M1 6C0.5 2 4 0.2 8 0.6C12 1 14 3 17 2.4C20.5 1.8 22 4 21.6 7C21.2 10.4 18.5 11.6 16 11.2C13.5 10.8 13 9 10.5 9.4C8 9.8 5.5 11.4 3.5 10.4C1.6 9.5 1.2 8 1 6Z" fill="#b7ddb7" stroke="#8a9a8a" stroke-width="1" opacity="0.8"/><g opacity="0.9"><rect x="12.5" y="12.5" width="11" height="11" rx="1" fill="#4b6fb0"/><path d="M15.5 21.0A3.6 3.6 0 1 1 21.5 18.8" fill="none" stroke="#fff" stroke-width="1.5"/><path d="M13.7 20.8L17.5 19.7L16.1 22.9Z" fill="#fff"/><circle cx="18.5" cy="18.5" r="0.9" fill="#fff"/></g></svg>
<svg style="position:absolute;left:131.0px;top:100.0px;overflow:visible" width="24" height="24" viewBox="0 0 24 24" ><g opacity=".85"><circle cx="8" cy="8" r="7.2" fill="#c4e4c4" stroke="#9cc49c" stroke-width="1"/><path d="M12 8H19.8L23.8 15L19.8 22H12L8 15Z" fill="#bcd0e2" stroke="#8aa6c4" stroke-width="1" stroke-linejoin="round"/><path d="M7.5 7.5C12 5 16 8 16.3 17" fill="none" stroke="#777" stroke-width="1.1"/><path d="M13.6 14.4L16.3 17.8L18.8 14.2" fill="none" stroke="#777" stroke-width="1.1"/></g></svg>
<svg style="position:absolute;left:169.0px;top:100.0px;overflow:visible" width="24" height="24" viewBox="0 0 24 24" ><g opacity=".85"><path d="M1.5 6.5C1 2.5 4.5 0.8 8.5 1.2C12.5 1.6 14.5 3.4 17.5 2.8C20.8 2.2 22.4 4.2 22 7.2C21.6 10.6 19 11.8 16.5 11.4C14 11 13.5 9.4 11 9.8C8.5 10.2 6 11.6 4 10.6C2.2 9.7 1.7 8.3 1.5 6.5Z" fill="#b7ddb7" stroke="#90b090" stroke-width="1"/><path d="M4.5 6.2C4.5 3.8 7.5 3 10 3.6C12.4 4.2 13 6 11.4 7.6C9.6 9.2 4.5 9 4.5 6.2Z" fill="#e6e6e6" stroke="#90b090" stroke-width="0.9"/></g><g opacity="0.9"><rect x="12.5" y="12.5" width="10" height="10" rx="1.8" fill="#d8b84a"/><g stroke="#fff" stroke-width="1.5" stroke-linecap="round"><path d="M17.5 14.3V20.7M14.7 15.9L20.3 19.1M20.3 15.9L14.7 19.1"/></g><circle cx="17.5" cy="17.5" r="1" fill="#d8b84a"/></g></svg>
<svg style="position:absolute;left:207.0px;top:100.0px;overflow:visible" width="24" height="24" viewBox="0 0 24 24" ><g opacity=".85"><path d="M1.5 6.5C1 2.5 4.5 0.8 8.5 1.2C12.5 1.6 14.5 3.4 17.5 2.8C20.8 2.2 22.4 4.2 22 7.2C21.6 10.6 19 11.8 16.5 11.4C14 11 13.5 9.4 11 9.8C8.5 10.2 6 11.6 4 10.6C2.2 9.7 1.7 8.3 1.5 6.5Z" fill="#c4c4c4" stroke="#9a9a9a" stroke-width="1"/><path d="M1.5 20C1 16 4 12.6 7 12.8C9.6 13 10.4 16 9 19C7.6 22 2 23 1.5 20Z" fill="#b7ddb7" stroke="#90b090" stroke-width="1"/></g><g opacity="0.9"><rect x="12.5" y="12.5" width="10" height="10" rx="1.8" fill="#d8b84a"/><g stroke="#fff" stroke-width="1.5" stroke-linecap="round"><path d="M17.5 14.3V20.7M14.7 15.9L20.3 19.1M20.3 15.9L14.7 19.1"/></g><circle cx="17.5" cy="17.5" r="1" fill="#d8b84a"/></g></svg>
<svg style="position:absolute;left:245.0px;top:100.0px;overflow:visible" width="24" height="24" viewBox="0 0 24 24" ><g opacity=".85"><path d="M1.5 6.5C1 2.5 4.5 0.8 8.5 1.2C12.5 1.6 14.5 3.4 17.5 2.8C20.8 2.2 22.4 4.2 22 7.2C21.6 10.6 19 11.8 16.5 11.4C14 11 13.5 9.4 11 9.8C8.5 10.2 6 11.6 4 10.6C2.2 9.7 1.7 8.3 1.5 6.5Z" fill="#b7ddb7" stroke="#90b090" stroke-width="1"/><path d="M4.5 6.2C4.5 3.8 7.5 3 10 3.6C12.4 4.2 13 6 11.4 7.6C9.6 9.2 4.5 9 4.5 6.2Z" fill="#e6e6e6" stroke="#90b090" stroke-width="0.9"/></g><g opacity="0.6"><rect x="13" y="13" width="10" height="10" rx="1.5" fill="#e8505a"/><path d="M15.3 15.3L20.7 20.7M20.7 15.3L15.3 20.7" stroke="#fff" stroke-width="1.7" stroke-linecap="round"/></g></svg>
<svg style="position:absolute;left:283.0px;top:100.0px;overflow:visible" width="24" height="24" viewBox="0 0 24 24" ><g opacity=".85"><path d="M1.5 6.5C1 2.5 4.5 0.8 8.5 1.2C12.5 1.6 14.5 3.4 17.5 2.8C20.8 2.2 22.4 4.2 22 7.2C21.6 10.6 19 11.8 16.5 11.4C14 11 13.5 9.4 11 9.8C8.5 10.2 6 11.6 4 10.6C2.2 9.7 1.7 8.3 1.5 6.5Z" fill="#c4c4c4" stroke="#9a9a9a" stroke-width="1"/><path d="M1.5 20C1 16 4 12.6 7 12.8C9.6 13 10.4 16 9 19C7.6 22 2 23 1.5 20Z" fill="#b7ddb7" stroke="#90b090" stroke-width="1"/></g><g opacity="0.6"><rect x="13" y="13" width="10" height="10" rx="1.5" fill="#e8505a"/><path d="M15.3 15.3L20.7 20.7M20.7 15.3L15.3 20.7" stroke="#fff" stroke-width="1.7" stroke-linecap="round"/></g></svg>
<svg style="position:absolute;left:321.0px;top:100.0px;overflow:visible" width="24" height="24" viewBox="0 0 24 24" ><g opacity=".9"><path d="M2.5 10L5.5 17L9 14.5L11 11Z" fill="#f6dc50" stroke="#c8aa28" stroke-width="0.8"/><path d="M2 7C1.6 3.4 5 1.8 9 2.2C13 2.6 15 4 17.6 3.4C20.6 2.8 21.8 5 21.4 8C21 11.4 18.8 12.4 16.6 12C14.4 11.6 12.6 9.8 10.4 10.6C8 11.4 7 15.4 5.4 16.6C4 15 2.3 9.5 2 7Z" fill="#b7ddb7" stroke="#8aa88a" stroke-width="1"/></g></svg>
<svg style="position:absolute;left:359.0px;top:100.0px;overflow:visible" width="24" height="24" viewBox="0 0 24 24" ><g opacity=".9"><path d="M1.5 8C1 3.5 5 1.2 11.5 1.4C18 1.6 22.6 4 22.4 8.6C22.2 13.4 19.6 15.6 17.2 14.8C15 14 13.4 12.2 11.6 12.2C9.6 12.2 8.4 14.4 6.4 14.8C3.6 15.4 1.9 12 1.5 8Z" fill="#f4e070" stroke="#c8b040" stroke-width="1"/><path d="M5 7.8C4.8 5.4 7.4 4.2 11.6 4.4C15.8 4.6 18.8 6 18.8 8.4C18.8 10.6 17.8 11.6 16.6 11.2C15 10.6 13.6 9.2 11.6 9.2C9.6 9.2 8.4 10.8 7 11.2C5.6 11.4 5.1 9.8 5 7.8Z" fill="#b7ddb7" stroke="#9ab89a" stroke-width="0.8"/></g></svg>
<svg style="position:absolute;left:397.0px;top:100.0px;overflow:visible" width="24" height="24" viewBox="0 0 24 24" ><g opacity=".9"><path d="M1.5 7C1.5 3.5 5 1.5 9.5 2.2L11.5 6L8.5 13.5C4.5 13 1.5 10.5 1.5 7Z" fill="#b7ddb7" stroke="#8aa88a" stroke-width="1"/><path d="M14.5 2.6C18.5 1.6 22 3.6 21.6 7.4C21.3 10.6 18.5 13 16 12.6L13.6 6.6Z" fill="#b7ddb7" stroke="#8aa88a" stroke-width="1"/><path d="M13.5 1L10.5 15M11 3L13.8 15" stroke="#777" stroke-width="1.2"/><ellipse cx="9.2" cy="19" rx="1.8" ry="3.2" transform="rotate(18 9.2 19)" fill="none" stroke="#d0424a" stroke-width="1.5"/><ellipse cx="15.2" cy="19" rx="1.8" ry="3.2" transform="rotate(-18 15.2 19)" fill="none" stroke="#d0424a" stroke-width="1.5"/></g></svg>
<svg style="position:absolute;left:435.0px;top:100.0px;overflow:visible" width="24" height="24" viewBox="0 0 24 24" ><g opacity=".9"><path d="M1.5 7.5C1.5 3.5 5.5 1.4 10 2.4L11 12.5C9 14 6.5 14.4 4.5 13C2.6 11.6 1.5 9.6 1.5 7.5Z" fill="#b7ddb7" stroke="#8aa88a" stroke-width="1"/><path d="M14 2.4C18 1.2 22.2 3.2 22 7.6C21.8 11.4 19 14 16.6 13.4C15 13 14 12 13.4 11Z" fill="#b7ddb7" stroke="#8aa88a" stroke-width="1"/><path d="M9.5 4.5H15M9.5 7.2H15M9.5 10H15M11 3V11.5M13.4 3V11.5" stroke="#777" stroke-width="1.1"/><path d="M12.5 12C9 14.5 10 16.5 12.5 17.5C15 18.5 11 20.5 13.5 23" fill="none" stroke="#777" stroke-width="1.1"/></g></svg>
<svg style="position:absolute;left:473.0px;top:100.0px;overflow:visible" width="24" height="24" viewBox="0 0 24 24" ><g opacity=".95"><path d="M11 1.5L19.5 0.5L15.5 9L12.5 11.5L10 9.5L11.4 6.5L10 5Z" fill="#c8c8c8" stroke="#8a8a8a" stroke-width="0.8"/><path d="M11.5 11.5L12.3 13.5" stroke="#888" stroke-width="1"/><path d="M2.5 18.5H9.5L11.5 15L13.5 18.5H20.5V23.5H2.5Z" fill="#9ab8d0" stroke="#5a80a0" stroke-width="1"/><path d="M11.5 16.5L12.8 19L11.5 21L10.2 19Z" fill="#f6e28a" stroke="#c8aa28" stroke-width="0.5"/></g></svg>
<svg style="position:absolute;left:511.0px;top:100.0px;overflow:visible" width="24" height="24" viewBox="0 0 24 24" ><g opacity=".95"><path d="M11 21.5C5.5 21.5 2 17 2.6 12C3.2 7 7.5 3.6 12.5 4.4C16 5 18.5 7.4 19.4 10.4" fill="none" stroke="#6aa0e8" stroke-width="2.4" stroke-linecap="round"/><path d="M14.8 10.2L23.4 9L19.6 16.6Z" fill="#5a94e0"/><path d="M11 9V15M8 12H14" stroke="#a8c4ec" stroke-width="0.8" stroke-dasharray="1 1"/></g></svg>
<div id="ltb"></div>
<svg style="position:absolute;left:6.5px;top:135.0px;overflow:visible" width="36" height="6" viewBox="0 0 36 6" ><rect x="0" y="0" width="2" height="2" fill="#fafafa"/><rect x="1" y="1" width="1.6" height="1.6" fill="#b4b4b4"/><rect x="3" y="3" width="2" height="2" fill="#fafafa"/><rect x="4" y="4" width="1.6" height="1.6" fill="#b4b4b4"/><rect x="6" y="0" width="2" height="2" fill="#fafafa"/><rect x="7" y="1" width="1.6" height="1.6" fill="#b4b4b4"/><rect x="9" y="3" width="2" height="2" fill="#fafafa"/><rect x="10" y="4" width="1.6" height="1.6" fill="#b4b4b4"/><rect x="12" y="0" width="2" height="2" fill="#fafafa"/><rect x="13" y="1" width="1.6" height="1.6" fill="#b4b4b4"/><rect x="15" y="3" width="2" height="2" fill="#fafafa"/><rect x="16" y="4" width="1.6" height="1.6" fill="#b4b4b4"/><rect x="18" y="0" width="2" height="2" fill="#fafafa"/><rect x="19" y="1" width="1.6" height="1.6" fill="#b4b4b4"/><rect x="21" y="3" width="2" height="2" fill="#fafafa"/><rect x="22" y="4" width="1.6" height="1.6" fill="#b4b4b4"/><rect x="24" y="0" width="2" height="2" fill="#fafafa"/><rect x="25" y="1" width="1.6" height="1.6" fill="#b4b4b4"/><rect x="27" y="3" width="2" height="2" fill="#fafafa"/><rect x="28" y="4" width="1.6" height="1.6" fill="#b4b4b4"/><rect x="30" y="0" width="2" height="2" fill="#fafafa"/><rect x="31" y="1" width="1.6" height="1.6" fill="#b4b4b4"/><rect x="33" y="3" width="2" height="2" fill="#fafafa"/><rect x="34" y="4" width="1.6" height="1.6" fill="#b4b4b4"/></svg>
<svg style="position:absolute;left:12.0px;top:146.5px;overflow:visible" width="24" height="24" viewBox="0 0 24 24" ><path d="M3 3.5L9.5 17.5L15.5 3.5H21" fill="none" stroke="#2f4f6f" stroke-width="1.3" stroke-linejoin="round"/><g fill="#e8e8e8" stroke="#2f4f6f" stroke-width="1.1"><circle cx="3" cy="3.5" r="1.9"/><circle cx="15.5" cy="3.5" r="1.9"/><circle cx="21" cy="3.5" r="1.9"/><circle cx="9.5" cy="17.5" r="1.9"/></g><rect x="15" y="15.3" width="9" height="9" rx="1.6" fill="#5a9a5a" stroke="#4a8a4a" stroke-width="0.6"/><path d="M19.5 17.1V22.5M16.8 19.8H22.2" stroke="#fff" stroke-width="1.9"/></svg>
<svg style="position:absolute;left:12.0px;top:184.5px;overflow:visible" width="24" height="24" viewBox="0 0 24 24" ><rect x="0.5" y="0.5" width="6.4" height="6.4" fill="#1f3a5f"/><rect x="6.9" y="0.5" width="6.4" height="6.4" fill="#6a9ad0"/><rect x="13.3" y="0.5" width="6.4" height="6.4" fill="#1f3a5f"/><rect x="0.5" y="6.9" width="6.4" height="6.4" fill="#6a9ad0"/><rect x="6.9" y="6.9" width="6.4" height="6.4" fill="#1f3a5f"/><rect x="13.3" y="6.9" width="6.4" height="6.4" fill="#8ab0dc"/><rect x="0.5" y="13.3" width="6.4" height="6.4" fill="#1f3a5f"/><rect x="6.9" y="13.3" width="6.4" height="6.4" fill="#6a9ad0"/><rect x="13.3" y="13.3" width="6.4" height="6.4" fill="#8ab0dc"/><rect x="15" y="15.3" width="9" height="9" rx="1.6" fill="#5a9a5a" stroke="#4a8a4a" stroke-width="0.6"/><path d="M19.5 17.1V22.5M16.8 19.8H22.2" stroke="#fff" stroke-width="1.9"/></svg>
<svg style="position:absolute;left:12.0px;top:222.5px;overflow:visible" width="24" height="24" viewBox="0 0 24 24" ><g fill="#6f9fd0" stroke="#2a4f80" stroke-width="1.1" stroke-linejoin="round"><path d="M13.5 1.6C16 0.8 18.2 2.6 18 6C17.8 8.6 16.6 10.4 15.2 10.8C14.6 11 14 10.2 14 8Z"/><path d="M5.8 2C3 0.5 0.6 2.5 0.6 6C0.6 9.5 2 12.8 4 13.2C5.2 13.4 5.8 12 5.8 10.5Z"/><path d="M5.8 2.2C7 0.8 11.5 0.4 13.5 1.6C15 2.6 14.6 6 14 8C13.4 10.5 13.4 13 13.2 16C13 18.2 11.8 18.6 10.4 18.4C8.8 18.2 8.6 16.5 8.6 14.5C8.6 12.5 8.8 11.5 8 10.8C7 10 5.8 10.5 5.8 10.5Z"/></g><path d="M15.2 10.9L17.8 11.4M8 4C7.2 6 7.4 9 8 10.8M12.6 5.4C11.6 6.5 11.8 8.6 12.8 9.2" fill="none" stroke="#2a4f80" stroke-width="1.1" stroke-linecap="round"/><rect x="15" y="15.3" width="9" height="9" rx="1.6" fill="#5a9a5a" stroke="#4a8a4a" stroke-width="0.6"/><path d="M19.5 17.1V22.5M16.8 19.8H22.2" stroke="#fff" stroke-width="1.9"/></svg>
<svg style="position:absolute;left:12.0px;top:260.5px;overflow:visible" width="24" height="24" viewBox="0 0 24 24" ><path d="M1.5 23.5C3 15 9 5 23 0.8C22 7 17 12.5 9 15.5C5.5 17 3.6 20 2.6 23.5Z" fill="#5f8cc4" stroke="#2f4f7f" stroke-width="0.9" stroke-linejoin="round"/><path d="M2.5 22C5 14 11 7 21.5 2.5" fill="none" stroke="#dbe8f6" stroke-width="1"/><path d="M9 14.5L12 8M13.5 12.5L16 5.5M17 9.8L19 4" stroke="#2f4f7f" stroke-width="0.6"/><rect x="15" y="15.3" width="9" height="9" rx="1.6" fill="#5a9a5a" stroke="#4a8a4a" stroke-width="0.6"/><path d="M19.5 17.1V22.5M16.8 19.8H22.2" stroke="#fff" stroke-width="1.9"/></svg>
<svg style="position:absolute;left:12.0px;top:298.5px;overflow:visible" width="24" height="24" viewBox="0 0 24 24" ><path d="M1.5 1C11 1.5 21 6 23.5 13.5C15 14 6 17.5 1 22.5C5.5 16 6.5 8.5 1.5 1Z" fill="#5f8cc4" stroke="#2f4f7f" stroke-width="0.9" stroke-linejoin="round"/><path d="M7.5 2.6C11 8 11 13.5 8 17.6M12.5 4.4C16 9 16 12.6 14 15.4M17.5 7C20 10 20.4 12 19.6 14" fill="none" stroke="#2f4f7f" stroke-width="0.9"/><rect x="15" y="15.3" width="9" height="9" rx="1.6" fill="#5a9a5a" stroke="#4a8a4a" stroke-width="0.6"/><path d="M19.5 17.1V22.5M16.8 19.8H22.2" stroke="#fff" stroke-width="1.9"/></svg>
<svg style="position:absolute;left:12.0px;top:336.5px;overflow:visible" width="24" height="24" viewBox="0 0 24 24" ><ellipse cx="11.7" cy="10.5" rx="11.2" ry="9.8" fill="#b9d2ee" stroke="#5a8ac8" stroke-width="1"/><path d="M3.6 7L8 4L10.4 6L8 9L4.6 10ZM11.6 4L18 3.5L20.4 7L17 8L16 11L12.6 9ZM5.6 12L10.4 12L12.6 16L9.4 19L5.6 16ZM15 13L19.4 12L20.4 15L17 18Z" fill="#3f5f8f"/><path d="M0.8 10.5H22.6M11.7 1V20M4 5.5C8 7 15 7 19.4 5.5M4 15.5C8 14 15 14 19.4 15.5" fill="none" stroke="#dce8f6" stroke-width="0.7"/><rect x="15" y="15.3" width="9" height="9" rx="1.6" fill="#5a9a5a" stroke="#4a8a4a" stroke-width="0.6"/><path d="M19.5 17.1V22.5M16.8 19.8H22.2" stroke="#fff" stroke-width="1.9"/></svg>
<svg style="position:absolute;left:12.0px;top:374.5px;overflow:visible" width="24" height="24" viewBox="0 0 24 24" ><ellipse cx="11.5" cy="10.5" rx="11" ry="9.6" fill="#4f7fc0" stroke="#1f2f4f" stroke-width="1.3"/><ellipse cx="11.5" cy="10.5" rx="5" ry="9.4" fill="#8fb4e0" stroke="#e8f0fa" stroke-width="0.9"/><path d="M1 7H22M1 14H22" stroke="#e8f0fa" stroke-width="1.6"/><path d="M0.8 10.5H22.2" stroke="#1f2f4f" stroke-width="1.7"/><rect x="15" y="15.3" width="9" height="9" rx="1.6" fill="#5a9a5a" stroke="#4a8a4a" stroke-width="0.6"/><path d="M19.5 17.1V22.5M16.8 19.8H22.2" stroke="#fff" stroke-width="1.9"/></svg>
<svg style="position:absolute;left:12.0px;top:412.5px;overflow:visible" width="24" height="24" viewBox="0 0 24 24" ><ellipse cx="11.5" cy="10.5" rx="11" ry="9.6" fill="#e4eef8" stroke="#5a8ad0" stroke-width="1.1"/><path d="M1 7H22M1 14H22M0.6 10.5H22.4M11.5 1V20M5.5 2.6C3 7 3 14 5.5 18.4M17.5 2.6C20 7 20 14 17.5 18.4" fill="none" stroke="#7aa4dc" stroke-width="0.8"/><path d="M5.5 5L9.5 15.5L13.5 5H17.5" fill="none" stroke="#222" stroke-width="1.1"/><g fill="#f4f4f4" stroke="#222" stroke-width="0.9"><circle cx="5.5" cy="5" r="1.4"/><circle cx="13.5" cy="5" r="1.4"/><circle cx="17.5" cy="5" r="1.4"/><circle cx="9.5" cy="15.5" r="1.4"/></g><rect x="15" y="15.3" width="9" height="9" rx="1.6" fill="#5a9a5a" stroke="#4a8a4a" stroke-width="0.6"/><path d="M19.5 17.1V22.5M16.8 19.8H22.2" stroke="#fff" stroke-width="1.9"/></svg>
<svg style="position:absolute;left:12.0px;top:450.5px;overflow:visible" width="24" height="24" viewBox="0 0 24 24" ><path d="M5 5.5C5 2.5 7.5 1 10 1.4C13.5 2 15 6 13.5 10C12.2 13.2 9.5 15.4 6.5 16L5.8 14.6C8.5 13.4 10 11.4 10 9.4C7.5 10 5 8.4 5 5.5Z" fill="#5f8cc4" stroke="#2f4f7f" stroke-width="0.9" stroke-linejoin="round"/><rect x="15" y="15.3" width="9" height="9" rx="1.6" fill="#5a9a5a" stroke="#4a8a4a" stroke-width="0.6"/><path d="M19.5 17.1V22.5M16.8 19.8H22.2" stroke="#fff" stroke-width="1.9"/></svg>
<svg style="position:absolute;left:12.0px;top:488.5px;overflow:visible" width="24" height="24" viewBox="0 0 24 24" ><path d="M3 3.5L9.5 17.5L15.5 3.5H21" fill="none" stroke="#2f4f6f" stroke-width="1.3" stroke-linejoin="round"/><g fill="#e8e8e8" stroke="#2f4f6f" stroke-width="1.1"><circle cx="3" cy="3.5" r="1.9"/><circle cx="15.5" cy="3.5" r="1.9"/><circle cx="21" cy="3.5" r="1.9"/><circle cx="9.5" cy="17.5" r="1.9"/></g><g opacity="1"><rect x="14" y="14" width="10" height="10" rx="1.8" fill="#c8a800"/><g stroke="#fff" stroke-width="1.5" stroke-linecap="round"><path d="M19 15.8V22.2M16.2 17.4L21.8 20.6M21.8 17.4L16.2 20.6"/></g><circle cx="19" cy="19" r="1" fill="#c8a800"/></g></svg>
<svg style="position:absolute;left:37.5px;top:503.5px;overflow:visible" width="8" height="6" viewBox="0 0 8 6" ><path d="M0 0H8L4 6Z" fill="#5a5a5a"/></svg>
<svg style="position:absolute;left:12.0px;top:527.0px;overflow:visible" width="24" height="24" viewBox="0 0 24 24" ><rect x="0.5" y="0.5" width="19.5" height="19.5" fill="#efefef" stroke="#7a7a7a" stroke-width="1"/><rect x="14" y="14" width="10" height="10" rx="2" fill="#e8505a"/><path d="M16 19H22" stroke="#fff" stroke-width="2.2"/></svg>
<svg style="position:absolute;left:6.5px;top:563.0px;overflow:visible" width="36" height="6" viewBox="0 0 36 6" ><rect x="0" y="0" width="2" height="2" fill="#fafafa"/><rect x="1" y="1" width="1.6" height="1.6" fill="#b4b4b4"/><rect x="3" y="3" width="2" height="2" fill="#fafafa"/><rect x="4" y="4" width="1.6" height="1.6" fill="#b4b4b4"/><rect x="6" y="0" width="2" height="2" fill="#fafafa"/><rect x="7" y="1" width="1.6" height="1.6" fill="#b4b4b4"/><rect x="9" y="3" width="2" height="2" fill="#fafafa"/><rect x="10" y="4" width="1.6" height="1.6" fill="#b4b4b4"/><rect x="12" y="0" width="2" height="2" fill="#fafafa"/><rect x="13" y="1" width="1.6" height="1.6" fill="#b4b4b4"/><rect x="15" y="3" width="2" height="2" fill="#fafafa"/><rect x="16" y="4" width="1.6" height="1.6" fill="#b4b4b4"/><rect x="18" y="0" width="2" height="2" fill="#fafafa"/><rect x="19" y="1" width="1.6" height="1.6" fill="#b4b4b4"/><rect x="21" y="3" width="2" height="2" fill="#fafafa"/><rect x="22" y="4" width="1.6" height="1.6" fill="#b4b4b4"/><rect x="24" y="0" width="2" height="2" fill="#fafafa"/><rect x="25" y="1" width="1.6" height="1.6" fill="#b4b4b4"/><rect x="27" y="3" width="2" height="2" fill="#fafafa"/><rect x="28" y="4" width="1.6" height="1.6" fill="#b4b4b4"/><rect x="30" y="0" width="2" height="2" fill="#fafafa"/><rect x="31" y="1" width="1.6" height="1.6" fill="#b4b4b4"/><rect x="33" y="3" width="2" height="2" fill="#fafafa"/><rect x="34" y="4" width="1.6" height="1.6" fill="#b4b4b4"/></svg>
<div id="lp"><div id="lph"><svg style="position:absolute;left:3px;top:3.5px" width="36" height="16" viewBox="0 0 36 16"><circle cx="7" cy="7.5" r="6.6" fill="#3a3a3a"/><path d="M4.4 4.9L9.6 10.1M9.6 4.9L4.4 10.1" stroke="#fff" stroke-width="2" stroke-linecap="round"/><circle cx="27" cy="7.5" r="6.6" fill="#3a3a3a"/><rect x="25.6" y="4.4" width="4.6" height="4" fill="none" stroke="#fff" stroke-width="1.1"/><rect x="23.6" y="6.6" width="4.6" height="4" fill="#3a3a3a" stroke="#fff" stroke-width="1.1"/></svg><span>Layers</span></div>
<div id="ll"><div class="row" style="top:0px;">
<svg style="position:absolute;left:6px;top:5px" width="10" height="10"><path d="M1 0.5L9 5L1 9.5Z" fill="#7a7a7a"/></svg>
<div class="cb"></div>
<svg style="position:absolute;left:27px;top:-2px" width="18" height="18"><path d="M3.6 10.6L6.8 14.4L12.6 3.6" fill="none" stroke="#161c28" stroke-width="2.5" stroke-linecap="round" stroke-linejoin="round"/></svg>
<svg style="position:absolute;left:53px;top:1px" width="18" height="18"><g fill="#fff" stroke="#8a8a8a" stroke-width="0.8"><circle cx="5.5" cy="5.5" r="1.1"/><circle cx="13.5" cy="3" r="1.1"/><circle cx="4.5" cy="12.5" r="1.1"/></g></svg>
<span class="t" style="">places</span>
</div>
<div class="row" style="top:20px;">
<svg style="position:absolute;left:6px;top:5px" width="10" height="10"><path d="M1 0.5L9 5L1 9.5Z" fill="#7a7a7a"/></svg>
<div class="cb"></div>
<svg style="position:absolute;left:27px;top:-2px" width="18" height="18"><path d="M3.6 10.6L6.8 14.4L12.6 3.6" fill="none" stroke="#161c28" stroke-width="2.5" stroke-linecap="round" stroke-linejoin="round"/></svg>
<svg style="position:absolute;left:53px;top:1px" width="18" height="18"><path d="M1.5 8.5C1 4.5 3.5 3.2 6.5 3.6C9.5 4 10.5 5 12.5 4.4C15.5 3.6 17 5.4 16.6 8.4C16.2 11.6 14.4 12.6 12.6 12C10.8 11.4 10.4 9.6 8.4 10C6.4 10.4 5 12.6 3.4 12C2 11.4 1.7 10 1.5 8.5Z" fill="#e6e6e6" stroke="#8a8a8a" stroke-width="0.9"/></svg>
<span class="t" style="">buildings</span>
</div>
<div class="row" style="top:40px;">
<svg style="position:absolute;left:6px;top:5px" width="10" height="10"><path d="M1 0.5L9 5L1 9.5Z" fill="#7a7a7a"/></svg>
<div class="cb"></div>
<svg style="position:absolute;left:27px;top:-2px" width="18" height="18"><path d="M3.6 10.6L6.8 14.4L12.6 3.6" fill="none" stroke="#161c28" stroke-width="2.5" stroke-linecap="round" stroke-linejoin="round"/></svg>
<svg style="position:absolute;left:53px;top:1px" width="18" height="18"><path d="M2.5 5L6.5 15.5L11 3.5L15.5 3" fill="none" stroke="#6a6a6a" stroke-width="0.9"/><g fill="#fff" stroke="#7a7a7a" stroke-width="0.7"><circle cx="2.5" cy="5" r="1"/><circle cx="6.5" cy="15.5" r="1"/><circle cx="11" cy="3.5" r="1"/><circle cx="15.5" cy="3" r="1"/></g></svg>
<span class="t" style="">roads</span>
</div>
<div class="row" style="top:60px;">
<svg style="position:absolute;left:6px;top:5px" width="10" height="10"><path d="M1 0.5L9 5L1 9.5Z" fill="#7a7a7a"/></svg>
<div class="cb"></div>
<svg style="position:absolute;left:27px;top:-2px" width="18" height="18"><path d="M3.6 10.6L6.8 14.4L12.6 3.6" fill="none" stroke="#161c28" stroke-width="2.5" stroke-linecap="round" stroke-linejoin="round"/></svg>
<svg style="position:absolute;left:53px;top:1px" width="18" height="18"><path d="M1.5 8.5C1 4.5 3.5 3.2 6.5 3.6C9.5 4 10.5 5 12.5 4.4C15.5 3.6 17 5.4 16.6 8.4C16.2 11.6 14.4 12.6 12.6 12C10.8 11.4 10.4 9.6 8.4 10C6.4 10.4 5 12.6 3.4 12C2 11.4 1.7 10 1.5 8.5Z" fill="#e6e6e6" stroke="#8a8a8a" stroke-width="0.9"/></svg>
<span class="t" style="">water</span>
</div>
<div class="row" style="top:80px;">
<svg style="position:absolute;left:5px;top:6px" width="11" height="10"><path d="M0.5 1H10.5L5.5 9Z" fill="#7a7a7a"/></svg>
<div class="cb"></div>
<svg style="position:absolute;left:27px;top:-2px" width="18" height="18"><path d="M3.6 10.6L6.8 14.4L12.6 3.6" fill="none" stroke="#161c28" stroke-width="2.5" stroke-linecap="round" stroke-linejoin="round"/></svg>
<svg style="position:absolute;left:53px;top:1px" width="18" height="18"><path d="M2.5 5L6.5 15.5L11 3.5L15.5 3" fill="none" stroke="#6a6a6a" stroke-width="0.9"/><g fill="#fff" stroke="#7a7a7a" stroke-width="0.7"><circle cx="2.5" cy="5" r="1"/><circle cx="6.5" cy="15.5" r="1"/><circle cx="11" cy="3.5" r="1"/><circle cx="15.5" cy="3" r="1"/></g></svg>
<span class="t" style="">routes</span>
</div>
<div class="row" style="top:154px;">
<svg style="position:absolute;left:6px;top:5px" width="10" height="10"><path d="M1 0.5L9 5L1 9.5Z" fill="#7a7a7a"/></svg>
<div class="cb"></div>
<svg style="position:absolute;left:27px;top:-2px" width="18" height="18"><path d="M3.6 10.6L6.8 14.4L12.6 3.6" fill="none" stroke="#161c28" stroke-width="2.5" stroke-linecap="round" stroke-linejoin="round"/></svg>
<svg style="position:absolute;left:53px;top:1px" width="18" height="18"><path d="M2.5 5L6.5 15.5L11 3.5L15.5 3" fill="none" stroke="#6a6a6a" stroke-width="0.9"/><g fill="#fff" stroke="#7a7a7a" stroke-width="0.7"><circle cx="2.5" cy="5" r="1"/><circle cx="6.5" cy="15.5" r="1"/><circle cx="11" cy="3.5" r="1"/><circle cx="15.5" cy="3" r="1"/></g></svg>
<span class="t" style="">rivers</span>
</div>
<div class="row" style="top:174px;">
<svg style="position:absolute;left:6px;top:5px" width="10" height="10"><path d="M1 0.5L9 5L1 9.5Z" fill="#7a7a7a"/></svg>
<div class="cb"></div>
<svg style="position:absolute;left:27px;top:-2px" width="18" height="18"><path d="M3.6 10.6L6.8 14.4L12.6 3.6" fill="none" stroke="#161c28" stroke-width="2.5" stroke-linecap="round" stroke-linejoin="round"/></svg>
<svg style="position:absolute;left:53px;top:1px" width="18" height="18"><path d="M1.5 8.5C1 4.5 3.5 3.2 6.5 3.6C9.5 4 10.5 5 12.5 4.4C15.5 3.6 17 5.4 16.6 8.4C16.2 11.6 14.4 12.6 12.6 12C10.8 11.4 10.4 9.6 8.4 10C6.4 10.4 5 12.6 3.4 12C2 11.4 1.7 10 1.5 8.5Z" fill="#e6e6e6" stroke="#8a8a8a" stroke-width="0.9"/></svg>
<span class="t" style="">school_property</span>
</div>
<div class="row" style="top:194px;background:#3874d6;color:#fff;">
<svg style="position:absolute;left:6px;top:5px" width="10" height="10"><path d="M1 0.5L9 5L1 9.5Z" fill="#8a8a8a"/></svg>
<div class="cb"></div>
<svg style="position:absolute;left:27px;top:-2px" width="18" height="18"><path d="M3.6 10.6L6.8 14.4L12.6 3.6" fill="none" stroke="#161c28" stroke-width="2.5" stroke-linecap="round" stroke-linejoin="round"/></svg>
<svg style="position:absolute;left:53px;top:1px" width="18" height="18"><path d="M1.5 8.5C1 4.5 3.5 3.2 6.5 3.6C9.5 4 10.5 5 12.5 4.4C15.5 3.6 17 5.4 16.6 8.4C16.2 11.6 14.4 12.6 12.6 12C10.8 11.4 10.4 9.6 8.4 10C6.4 10.4 5 12.6 3.4 12C2 11.4 1.7 10 1.5 8.5Z" fill="#eef2f8" stroke="#a8b8d0" stroke-width="0.9"/></svg>
<span class="t" style="text-decoration:underline;">landuse</span>
</div>
<div class="row" style="top:214px;">
<div class="cb"></div>
<svg style="position:absolute;left:53px;top:1px" width="18" height="18"><rect x="1.0" y="1.0" width="5.3" height="5.3" fill="#9a9a9a"/><rect x="6.3" y="1.0" width="5.3" height="5.3" fill="#c8c8c8"/><rect x="11.6" y="1.0" width="5.3" height="5.3" fill="#7a7a7a"/><rect x="1.0" y="6.3" width="5.3" height="5.3" fill="#b8b8b8"/><rect x="6.3" y="6.3" width="5.3" height="5.3" fill="#8a8a8a"/><rect x="11.6" y="6.3" width="5.3" height="5.3" fill="#d8d8d8"/><rect x="1.0" y="11.6" width="5.3" height="5.3" fill="#6a6a6a"/><rect x="6.3" y="11.6" width="5.3" height="5.3" fill="#a8a8a8"/><rect x="11.6" y="11.6" width="5.3" height="5.3" fill="#e4e4e4"/></svg>
<span class="t" style="">3420C_2010_327_RGB_LATLNG</span>
</div>
<div style="position:absolute;left:46px;top:109.5px;width:16px;height:1px;background:#f0a030"></div>
<div style="position:absolute;left:46px;top:127px;width:3px;height:2px;background:#e2d29a"></div><div style="position:absolute;left:53px;top:127px;width:4px;height:2px;background:#e2d29a"></div>
<div style="position:absolute;left:46px;top:145px;width:11px;height:3px;background:#dccb8c"></div></div>
<div style="position:absolute;left:1px;top:990px;width:292px;height:10px;background:#e4e4e4;border:1px solid #c8c8c8;border-top:1px solid #a0a0a0;border-radius:0 0 4px 4px;box-sizing:border-box"></div><div style="position:absolute;left:82px;top:990px;width:131px;height:21px;border:1px solid #a0a0a0;border-radius:4px;box-sizing:border-box;background:linear-gradient(#fff,#ececec);overflow:hidden;font-size:13px;line-height:18px"><div style="position:absolute;left:0;top:0;width:60px;height:20px;background:linear-gradient(#8a8a8a,#a0a0a0);color:#fff;text-align:center;border-right:1px solid #7a7a7a;text-shadow:0 1px 0 #6a6a6a">Layers</div><div style="position:absolute;left:61px;top:0;width:69px;height:20px;text-align:center">Browser</div></div>
</div>
<div id="sb">
<span style="left:955px;top:7px;color:#0000ee;text-decoration:underline">There is a new plugin available</span>
<div style="left:1143px;top:6px;width:20px;height:20px;border:1px solid #8a8a8a;background:#f2f2f2;box-sizing:border-box"></div>
<svg style="position:absolute;left:1145px;top:8px" width="16" height="16"><ellipse cx="7" cy="8" rx="3.6" ry="5.6" transform="rotate(-25 7 8)" fill="#888" stroke="#222" stroke-width="1.3"/><circle cx="9" cy="10.5" r="2.2" fill="#ddd" stroke="#222" stroke-width="0.9"/><path d="M9 3L13 1M11 6L14 5" stroke="#333" stroke-width="0.7"/></svg>
<span style="left:1172px;top:7px">Coordinate:</span>
<div style="left:1249px;top:6px;width:299px;height:20px;border:1px solid #a8a8a8;border-top-color:#8a8a8a;background:#fff;box-sizing:border-box;text-align:center;line-height:19px;font-size:13px">20.50163,-34.01202</div>
<span style="left:1558px;top:7px">Scale</span>
<div style="left:1604px;top:10px;width:93px;height:15px;border:1px solid #a8a8a8;border-radius:0 4px 4px 0;background:#fff;box-sizing:border-box;font-size:13px;line-height:14px"><span style="left:2px;top:0">1:5895</span><div style="left:78px;top:0;width:1px;height:13px;background:#c8c8c8"></div><svg style="position:absolute;left:82px;top:5px" width="7" height="5"><path d="M0 0H6L3 4.5Z" fill="#444"/></svg></div>
<div style="left:1704px;top:6px;width:20px;height:20px;border:1px solid #8a8a8a;background:#f0f0f0;box-sizing:border-box"></div>
<svg style="position:absolute;left:1705px;top:7px" width="18" height="18"><path d="M3 16C8 14 13 9 16 2C15 9 11 14 3 17Z" fill="#777" stroke="#555" stroke-width="0.6"/><circle cx="6" cy="6" r="3.6" fill="none" stroke="#d02020" stroke-width="1.4"/><path d="M3.6 3.6L8.4 8.4" stroke="#d02020" stroke-width="1.4"/></svg>
<div style="left:1730px;top:10px;width:12px;height:12px;border:1px solid #7a7a7a;border-radius:2.5px;background:linear-gradient(#f4f8fc,#c8d4e4)"></div>
<svg style="position:absolute;left:1730px;top:4px" width="18" height="18"><path d="M3.8 11L6.6 14.4L12.4 4.6" fill="none" stroke="#161c28" stroke-width="2.1" stroke-linecap="round" stroke-linejoin="round"/></svg>
<span style="left:1748px;top:7px">Render</span>
<span style="left:1796px;top:7px;color:#444">EPSG:4326</span>
<div style="left:1874px;top:7px;width:20px;height:19px;border:1px solid #8a8a8a;background:#eee;box-sizing:border-box"></div>
<svg style="position:absolute;left:1875px;top:8px" width="18" height="17"><circle cx="9" cy="8.5" r="6.4" fill="#bbb" stroke="#777" stroke-width="1"/><ellipse cx="9" cy="8.5" rx="3" ry="6.2" fill="none" stroke="#666" stroke-width="0.9"/><path d="M2.6 8.5H15.4M9 2V15M3.6 5.2H14.4M3.6 11.8H14.4" stroke="#666" stroke-width="0.8"/></svg>
<svg style="position:absolute;left:1906px;top:19px" width="13" height="13"><path d="M12 1L1 12M12 5L5 12M12 9L9 12" stroke="#8a8a8a" stroke-width="1"/></svg>
</div>
</div>
<svg id="map" width="1577" height="1011" viewBox="400 166 1577 1011" style="position:absolute;left:400px;top:166px">
<defs>
<pattern id="pw" x="3" y="3" width="5" height="5" patternUnits="userSpaceOnUse"><g shape-rendering="crispEdges"><rect width="5" height="5" fill="#a0ccff"/><g fill="#4163ff"><rect x="0" y="0" width="2" height="2"/><rect x="3" y="0" width="1" height="2"/><rect x="0" y="3" width="2" height="1"/><rect x="3" y="3" width="1" height="1"/></g></g></pattern>
<clipPath id="cA0"><rect x="400" y="166" width="450" height="359"/></clipPath>
<clipPath id="cA"><rect x="850" y="166" width="425" height="359"/></clipPath>
<clipPath id="cA3"><rect x="1275" y="166" width="702" height="359"/></clipPath>
<clipPath id="cB1"><rect x="400" y="525" width="450" height="285"/></clipPath>
<clipPath id="cB2"><rect x="850" y="525" width="425" height="285"/></clipPath>
<clipPath id="cB3"><rect x="1275" y="525" width="702" height="285"/></clipPath>
<clipPath id="cC1"><rect x="400" y="810" width="450" height="285"/></clipPath>
<clipPath id="cC2"><rect x="850" y="810" width="425" height="285"/></clipPath>
<clipPath id="cC3"><rect x="1275" y="810" width="702" height="285"/></clipPath>
<clipPath id="cD1"><rect x="400" y="1095" width="450" height="82"/></clipPath>
<clipPath id="cD2"><rect x="850" y="1095" width="425" height="82"/></clipPath>
<clipPath id="cD3"><rect x="1275" y="1095" width="702" height="82"/></clipPath>
</defs>
<rect x="400" y="166" width="1577" height="1011" fill="#fff"/>
<g clip-path="url(#cA0)">
</g>
<g clip-path="url(#cA)">
<polygon points="948.9,260.4 957.3,274.7 980.8,284.2 980.8,295.3 974.6,317.4 964.6,334.0 962.2,345.8 964.4,356.8 980.5,368.3 999.8,373.4 1018.1,369.9 1034.7,357.3 1100.0,393.1 1108.4,396.2 1100.0,401.1 1067.9,402.2 1027.0,412.6 996.0,423.2 1009.3,436.9 1012.6,451.7 1027.0,456.4 1039.2,471.9 1053.1,481.2 1056.2,502.2 1051.3,505.5 997.1,510.4 903.1,453.5 884.3,439.1 881.0,417.0 873.2,405.9 873.2,381.6 881.6,352.8 883.6,336.9 920.8,289.3 937.8,290.7" fill="#dbf7c9"/>
<polygon points="865.5,407.0 872.1,432.5 884.7,445.8 881.6,454.6 894.9,461.2 902.7,457.9 955.1,488.9 958.4,498.4 1011.5,521.0 1004.9,527.6 972.8,527.6 860.0,449.1 857.7,425.8" fill="#dbf7c9"/>
<polygon points="985.0,297.1 1006.0,298.0 1034.3,285.4 1042.9,284.7 1051.3,290.9 1075.7,291.3 1099.6,302.4 1114.4,293.3 1127.7,293.5 1138.3,299.7 1162.4,300.4 1186.3,312.3 1208.4,326.3 1224.3,354.6 1300.0,386.0 1300.0,527.6 1249.3,527.6 1237.2,508.8 1205.1,496.6 1195.1,451.9 1156.4,443.5 1122.1,429.2 1101.1,410.4 1112.2,399.7 1115.5,395.5 1041.4,354.6 1039.2,339.6 1031.4,324.1 1014.8,316.3 998.2,310.8 977.2,314.8" fill="#dbf7c9"/>
<polygon points="999.3,424.1 1092.3,413.2 1106.6,421.4 1115.5,449.1 1136.5,465.7 1139.8,483.4 1130.5,497.1 1065.0,503.3 1056.9,469.0 1021.5,445.8 1010.4,435.8" fill="#dbf7c9"/>
<polygon points="1161.9,447.3 1194.0,452.8 1204.0,497.7 1236.7,514.3 1235.0,527.6 1150.4,527.6 1152.0,512.1" fill="#dbf7c9"/>
<polygon points="1090.0,520.5 1106.6,527.6 1090.0,527.6" fill="#dbf7c9"/>
</g>
<g clip-path="url(#cA3)">
<polygon points="1250.0,365.7 1349.6,408.1 1361.7,404.2 1379.4,412.6 1363.9,448.0 1348.5,457.9 1330.8,501.1 1316.4,497.3 1250.0,527.6" fill="#dbf7c9"/>
<polygon points="1248.9,462.3 1316.4,496.6 1332.3,504.6 1373.9,525.8 1373.9,527.6 1248.9,527.6" fill="#dbf7c9"/>
<polygon points="1393.8,413.2 1417.0,405.9 1451.3,388.7 1487.8,387.8 1495.6,393.1 1518.8,392.0 1530.5,403.3 1522.6,407.5 1534.3,418.8 1540.9,419.2 1559.1,440.9 1579.2,433.1 1640.5,464.1 1631.6,471.2 1622.8,473.4 1552.0,463.5 1543.1,461.2 1477.9,527.6 1334.1,527.6 1335.2,507.7 1339.6,497.7 1336.9,493.8 1354.6,460.1 1383.4,442.9" fill="#dbf7c9"/>
<polygon points="1419.2,477.8 1438.1,472.7 1449.1,474.1 1458.0,478.9 1459.7,486.7 1456.9,496.6 1450.2,503.3 1422.6,506.6 1391.6,513.2 1381.6,527.6 1365.0,527.6 1367.3,519.9 1413.7,497.7" fill="#fff"/>
<polygon points="1544.2,464.6 1639.4,480.0 1623.9,527.6 1480.1,527.6" fill="#dbf7c9"/>
<polygon points="1511.1,496.6 1626.1,524.3 1625.0,526.9 1510.0,499.3" fill="#fff"/>
<polygon points="1647.1,469.4 1657.1,472.3 1698.0,495.5 1698.7,505.5 1630.5,525.4 1626.1,527.6 1629.4,521.0" fill="#dbf7c9"/>
</g>
<g clip-path="url(#cB1)">
<polygon points="850.0,790.5 844.2,812.6 850.0,812.6" fill="#dbf7c9"/>
</g>
<g clip-path="url(#cB2)">
<polygon points="967.3,522.8 988.3,538.7 1009.3,522.8" fill="#dbf7c9"/>
<polygon points="1090.0,522.8 1104.4,522.8 1112.2,529.4 1117.7,544.9 1125.0,562.6 1122.6,575.9 1117.0,587.6 1080.1,604.6" fill="#dbf7c9"/>
<polygon points="850.0,790.5 868.8,793.8 863.7,755.1 902.4,739.2 1061.3,735.2 1079.0,609.5 1096.7,602.9 1104.9,602.4 1110.0,596.2 1127.2,588.5 1177.4,596.9 1208.4,599.1 1209.5,602.9 1217.7,608.6 1219.5,615.7 1232.3,623.5 1232.3,606.9 1280.3,599.1 1289.2,605.8 1296.9,595.4 1300.0,594.7 1300.0,812.6 850.0,812.6" fill="#dbf7c9"/>
<polygon points="1238.3,535.0 1242.7,527.7 1250.9,529.9 1251.5,522.8 1300.0,522.8 1300.0,594.7 1296.9,595.4 1289.2,605.8 1280.3,597.6 1257.1,563.7 1248.2,543.8" fill="#dbf7c9"/>
<polygon points="1195.1,522.8 1212.8,528.1 1235.0,528.1 1236.1,522.8" fill="#dbf7c9"/>
</g>
<g clip-path="url(#cB3)">
<polygon points="1247.8,522.8 1700.0,522.8 1700.0,812.6 1247.8,812.6" fill="#dbf7c9"/>
<polygon points="1247.8,549.3 1250.0,549.3 1256.6,564.8 1281.0,598.0 1247.8,604.0" fill="#fff"/>
<polygon points="1369.0,529.9 1378.3,533.8 1363.3,558.2 1358.4,571.0 1354.4,574.1 1353.1,568.4 1357.5,555.5 1369.0,538.7" fill="#fff"/>
<polygon points="1610.6,522.8 1696.9,547.1 1673.7,572.1 1662.6,573.7 1622.8,614.6 1618.4,615.7 1599.6,641.2 1558.6,669.9 1558.6,677.2 1626.1,634.1 1662.6,634.5 1680.3,672.1 1683.6,699.3 1668.1,707.1 1658.2,707.5 1640.5,720.4 1664.2,736.9 1642.7,784.3 1646.0,799.3 1621.7,812.6 1714.6,812.6 1714.6,522.8" fill="#fff"/>
<polygon points="1656.6,599.1 1683.6,592.5 1662.6,601.8" fill="#dbf7c9"/>
<polygon points="1387.2,808.2 1495.6,778.3 1529.2,781.0 1540.3,791.6 1549.8,791.6 1552.0,812.6 1382.7,812.6" fill="#fff"/>
</g>
<g clip-path="url(#cC1)">
<polygon points="615.7,832.8 677.7,843.2 749.6,868.6 775.0,883.0 780.1,852.0 825.9,857.1 822.6,887.4 830.3,886.3 830.3,902.9 850.0,908.7 850.0,1002.5 841.4,1008.0 821.5,1011.8 786.1,1002.5 780.5,992.1 763.9,988.8 755.1,979.9 758.4,973.7 751.8,972.6 657.7,915.1 603.1,869.7" fill="#dbf7c9"/>
<polygon points="844.9,807.8 844.0,813.5 850.0,828.6 850.0,807.8" fill="#dbf7c9"/>
</g>
<g clip-path="url(#cC2)">
<polygon points="850.0,807.8 1236.1,807.8 1216.2,1008.0 1030.3,954.2 1018.1,960.4 1000.4,980.4 990.5,1010.2 976.5,1023.5 969.0,1002.0 942.9,1008.0 927.4,1004.7 903.5,1002.0 894.2,985.9 883.6,925.0 873.9,904.0 877.0,890.8 883.6,889.2 893.8,875.3 913.7,838.3 905.3,838.3 870.4,855.8 854.4,838.8 850.0,829.9" fill="#dbf7c9"/>
<polygon points="1236.1,807.8 1300.0,807.8 1300.0,833.2 1235.0,822.2" fill="#dbf7c9"/>
<polygon points="850.0,908.7 861.1,912.2 864.8,938.3 850.0,960.4" fill="#dbf7c9"/>
<polygon points="850.0,966.0 852.7,969.3 855.8,980.4 855.3,998.1 852.7,1002.9 850.0,1002.9" fill="#dbf7c9"/>
<polygon points="1020.4,967.5 1029.6,962.7 1031.4,968.2 1061.9,975.5 1028.8,1043.4 1029.9,1066.6 1062.4,1079.5 1045.8,1108.2 1008.2,1089.4 989.4,1074.4 980.1,1057.8 984.5,1037.9 983.8,1025.7 1000.4,1000.3" fill="#dbf7c9"/>
<polygon points="1067.9,1079.5 1091.2,1087.0 1113.3,1080.4 1155.3,1077.3 1209.5,1081.7 1208.4,1093.8 1189.6,1096.5 1170.8,1094.7 1146.5,1097.6 1061.3,1097.6 1061.3,1092.7" fill="#dbf7c9"/>
<polygon points="1300.0,990.3 1300.0,1064.4 1270.4,1079.9 1254.9,1095.4 1246.0,1103.1 1226.1,1097.6 1226.8,1091.6 1239.4,1068.8 1268.1,1025.7" fill="#dbf7c9"/>
</g>
<g clip-path="url(#cC3)">
<polygon points="1247.8,807.8 1388.7,807.8 1345.1,819.3 1344.0,841.4 1247.8,824.6" fill="#dbf7c9"/>
<polygon points="1361.7,884.1 1391.6,889.6 1386.1,915.1 1376.1,925.0 1342.9,982.6 1325.2,1006.9 1310.8,1054.5 1273.2,1074.4 1262.2,1089.9 1250.0,1098.5 1247.8,1098.5 1247.8,1053.4 1267.7,1025.7 1319.7,967.5 1345.1,922.8" fill="#dbf7c9"/>
<polygon points="1554.9,807.8 1625.0,807.8 1627.9,820.6 1610.2,840.5 1600.0,842.7 1580.1,852.0 1562.4,857.6 1557.1,849.8" fill="#dbf7c9"/>
<polygon points="1554.9,871.9 1566.8,868.2 1574.8,881.9 1573.0,889.2 1551.3,911.3 1544.2,911.8" fill="#dbf7c9"/>
<polygon points="1682.5,812.7 1644.9,841.0 1560.8,971.1 1558.0,986.5 1565.9,1009.1 1560.8,1029.0 1569.0,1041.9 1579.6,1104.0" fill="#dbf7c9"/>
</g>
<g clip-path="url(#cD1)">
</g>
<g clip-path="url(#cD2)">
<polygon points="1020.4,967.3 1029.6,962.5 1031.4,968.0 1061.9,975.3 1028.8,1043.2 1029.9,1066.5 1062.4,1079.3 1045.8,1108.1 1008.2,1089.2 989.4,1074.6 980.1,1057.6 984.5,1037.7 983.8,1025.5 1000.4,1000.1" fill="#dbf7c9"/>
<polygon points="1067.9,1079.3 1091.2,1086.8 1113.3,1080.8 1155.3,1077.1 1209.5,1081.9 1208.4,1093.7 1189.6,1096.3 1170.8,1094.6 1146.5,1097.4 1115.5,1109.6 1091.2,1108.1 1061.3,1092.6" fill="#dbf7c9"/>
<polygon points="1300.0,990.1 1300.0,1064.2 1270.4,1079.7 1254.9,1095.2 1246.0,1103.0 1243.4,1118.5 1231.6,1115.1 1226.8,1091.5 1239.4,1068.7 1268.1,1025.5" fill="#dbf7c9"/>
</g>
<g clip-path="url(#cD3)">
<polygon points="1310.8,1054.5 1273.2,1074.4 1262.2,1089.7 1250.0,1098.5 1247.8,1099.6 1247.8,1049.9 1250.0,1052.1" fill="#dbf7c9"/>
<polygon points="1569.0,1042.1 1579.6,1104.1 1595.1,1060.9 1595.1,1042.1" fill="#dbf7c9"/>
<polygon points="1583.4,1107.4 1585.8,1177.1 1579.6,1177.1" fill="#dbf7c9"/>
</g>
<g clip-path="url(#cA3)" fill="none" stroke="#9cc8f8" stroke-width="1.1" stroke-linejoin="round">
<polyline points="1554.2,164.8 1553.5,240.0 1552.7,259.9 1549.3,264.3 1550.9,272.1 1554.2,280.9 1553.8,290.9 1556.0,298.0"/>
</g>
<g clip-path="url(#cB1)" fill="none" stroke="#9cc8f8" stroke-width="1.1" stroke-linejoin="round">
<polyline points="542.3,588.1 532.7,602.4 523.9,624.6 524.6,632.3 519.0,641.8 510.6,677.7 509.1,708.6 513.9,726.3 509.5,729.6 508.4,739.6 511.7,749.6 510.6,757.3 513.9,765.0 527.2,779.4 533.4,798.2 532.7,810.4"/>
<polyline points="398.9,714.2 413.3,715.3 447.6,721.5 495.1,744.0 505.1,746.7 511.7,750.7"/>
</g>
<g clip-path="url(#cC1)" fill="none" stroke="#9cc8f8" stroke-width="1.1" stroke-linejoin="round">
<polyline points="532.3,808.9 538.3,828.8 541.6,845.4 548.7,857.6 558.2,866.4 577.0,877.5 591.4,889.6 605.8,906.2 621.2,938.3 640.0,967.1 650.0,977.0 665.5,991.4 690.9,1031.2 697.6,1048.9 699.1,1060.0 702.7,1073.3 709.7,1081.7 716.4,1084.3 725.2,1085.4 742.5,1095.4"/>
</g>
<g clip-path="url(#cD1)" fill="none" stroke="#9cc8f8" stroke-width="1.1" stroke-linejoin="round">
<polyline points="740.7,1094.1 758.4,1111.8 770.6,1115.1 786.1,1129.5 789.4,1143.9 796.0,1151.6 804.9,1155.6 815.9,1165.4 827.0,1166.7 851.3,1176.4"/>
</g>
<g clip-path="url(#cC3)" fill="none" stroke="#9cc8f8" stroke-width="1.1" stroke-linejoin="round">
<polyline points="1538.7,988.1 1544.2,1006.9 1550.4,1037.9 1540.9,1077.7 1543.1,1095.4"/>
</g>
<g clip-path="url(#cD3)" fill="none" stroke="#9cc8f8" stroke-width="1.1" stroke-linejoin="round">
<polyline points="1550.4,1038.8 1540.9,1077.5 1556.0,1177.1"/>
</g>
<g clip-path="url(#cA0)" fill="none" stroke-linejoin="round">
<polyline points="436.5,501.5 435.0,525.4" stroke="#ffef9e" stroke-width="3.0"/>
<polyline points="851.3,426.9 842.0,434.7 789.4,443.5 752.9,463.5 742.9,472.3 737.4,482.3 736.7,490.0 739.6,503.3 755.1,525.4" stroke="#ffef9e" stroke-width="3.0"/>
<polyline points="436.5,501.5 435.0,525.4" stroke="#bcbcbc" stroke-width="1.6" stroke-dasharray="1.8 1.15"/>
<polyline points="851.3,426.9 842.0,434.7 789.4,443.5 752.9,463.5 742.9,472.3 737.4,482.3 736.7,490.0 739.6,503.3 755.1,525.4" stroke="#bcbcbc" stroke-width="1.6" stroke-dasharray="1.8 1.15"/>
</g>
<g clip-path="url(#cA)" fill="none" stroke-linejoin="round">
<polyline points="848.9,429.8 856.6,421.4 860.0,410.4 861.1,392.7 864.4,388.2 869.5,388.2 905.3,417.0 940.7,424.1 980.5,422.7 1027.0,416.3 1093.4,409.9 1106.6,403.7 1112.2,399.7 1118.8,400.4 1186.3,424.7 1300.0,491.1" stroke="#ffef9e" stroke-width="3.0"/>
<polyline points="1104.0,323.0 1113.3,339.6 1118.8,357.3 1119.9,370.5 1115.5,388.2 1111.1,398.2 1102.2,403.7 1091.2,405.5 1076.1,405.9" stroke="#ffef9e" stroke-width="3.0"/>
<polyline points="848.9,429.8 856.6,421.4 860.0,410.4 861.1,392.7 864.4,388.2 869.5,388.2 905.3,417.0 940.7,424.1 980.5,422.7 1027.0,416.3 1093.4,409.9 1106.6,403.7 1112.2,399.7 1118.8,400.4 1186.3,424.7 1300.0,491.1" stroke="#bcbcbc" stroke-width="1.6" stroke-dasharray="1.8 1.15"/>
<polyline points="1104.0,323.0 1113.3,339.6 1118.8,357.3 1119.9,370.5 1115.5,388.2 1111.1,398.2 1102.2,403.7 1091.2,405.5 1076.1,405.9" stroke="#bcbcbc" stroke-width="1.6" stroke-dasharray="1.8 1.15"/>
</g>
<g clip-path="url(#cA3)" fill="none" stroke-linejoin="round">
<polyline points="1555.3,311.2 1555.3,321.4" stroke="#ffef9e" stroke-width="3.0"/>
<polyline points="1546.5,374.5 1488.9,384.9 1451.3,388.2 1417.0,405.9 1391.6,410.4 1363.9,403.7" stroke="#ffef9e" stroke-width="3.0"/>
<polyline points="1248.9,463.9 1369.5,523.2 1373.9,525.4" stroke="#ffef9e" stroke-width="3.0"/>
<polyline points="1551.3,463.5 1543.1,461.7 1477.9,525.8" stroke="#ffef9e" stroke-width="3.0"/>
<polyline points="1425.9,495.5 1367.3,521.0 1370.6,525.4" stroke="#ffef9e" stroke-width="3.0"/>
<polyline points="1555.3,311.2 1555.3,321.4" stroke="#bcbcbc" stroke-width="1.6" stroke-dasharray="1.8 1.15"/>
<polyline points="1546.5,374.5 1488.9,384.9 1451.3,388.2 1417.0,405.9 1391.6,410.4 1363.9,403.7" stroke="#bcbcbc" stroke-width="1.6" stroke-dasharray="1.8 1.15"/>
<polyline points="1248.9,463.9 1369.5,523.2 1373.9,525.4" stroke="#bcbcbc" stroke-width="1.6" stroke-dasharray="1.8 1.15"/>
<polyline points="1551.3,463.5 1543.1,461.7 1477.9,525.8" stroke="#bcbcbc" stroke-width="1.6" stroke-dasharray="1.8 1.15"/>
<polyline points="1425.9,495.5 1367.3,521.0 1370.6,525.4" stroke="#bcbcbc" stroke-width="1.6" stroke-dasharray="1.8 1.15"/>
</g>
<g clip-path="url(#cB1)" fill="none" stroke-linejoin="round">
<polyline points="435.0,523.9 429.9,580.3 426.5,622.3 424.8,653.3 416.6,693.1 412.8,715.3 414.4,719.7 422.1,721.9 433.2,722.3 437.6,726.3 442.5,740.7 444.2,756.2 438.7,775.0 433.2,797.1 429.9,810.4" stroke="#ffef9e" stroke-width="3.0"/>
<polyline points="754.0,523.9 765.0,543.8" stroke="#ffef9e" stroke-width="3.0"/>
<polyline points="520.6,707.5 515.7,728.5 515.0,737.4 516.2,748.5 519.5,760.6 531.6,770.6 541.6,790.5 542.7,797.1 539.4,810.4" stroke="#ffef9e" stroke-width="3.0"/>
<polyline points="435.0,523.9 429.9,580.3 426.5,622.3 424.8,653.3 416.6,693.1 412.8,715.3 414.4,719.7 422.1,721.9 433.2,722.3 437.6,726.3 442.5,740.7 444.2,756.2 438.7,775.0 433.2,797.1 429.9,810.4" stroke="#bcbcbc" stroke-width="1.6" stroke-dasharray="1.8 1.15"/>
<polyline points="754.0,523.9 765.0,543.8" stroke="#bcbcbc" stroke-width="1.6" stroke-dasharray="1.8 1.15"/>
<polyline points="520.6,707.5 515.7,728.5 515.0,737.4 516.2,748.5 519.5,760.6 531.6,770.6 541.6,790.5 542.7,797.1 539.4,810.4" stroke="#bcbcbc" stroke-width="1.6" stroke-dasharray="1.8 1.15"/>
</g>
<g clip-path="url(#cB2)" fill="none" stroke-linejoin="round">
<polyline points="1251.5,529.4 1301.3,548.9" stroke="#ffef9e" stroke-width="3.0"/>
<polyline points="1242.7,583.6 1281.4,644.5 1285.8,664.4 1301.3,689.8" stroke="#ffef9e" stroke-width="3.0"/>
<polyline points="1238.3,776.1 1236.1,810.4" stroke="#ffef9e" stroke-width="3.0"/>
<polyline points="1251.5,529.4 1301.3,548.9" stroke="#bcbcbc" stroke-width="1.6" stroke-dasharray="1.8 1.15"/>
<polyline points="1242.7,583.6 1281.4,644.5 1285.8,664.4 1301.3,689.8" stroke="#bcbcbc" stroke-width="1.6" stroke-dasharray="1.8 1.15"/>
<polyline points="1238.3,776.1 1236.1,810.4" stroke="#bcbcbc" stroke-width="1.6" stroke-dasharray="1.8 1.15"/>
</g>
<g clip-path="url(#cB3)" fill="none" stroke-linejoin="round">
<polyline points="1248.9,529.0 1283.2,542.3 1309.7,554.9 1347.3,567.5 1352.9,567.0 1356.2,556.0 1368.4,538.3 1369.5,523.9" stroke="#ffef9e" stroke-width="3.0"/>
<polyline points="1370.6,526.1 1378.3,528.3 1404.9,531.6 1455.8,535.0 1471.2,533.4 1481.9,523.9" stroke="#ffef9e" stroke-width="3.0"/>
<polyline points="1370.6,526.1 1377.2,531.6 1402.7,547.1 1409.3,561.5 1511.1,606.9 1526.5,616.8 1542.0,642.3 1556.4,668.8 1556.4,677.7 1542.0,713.1 1538.7,733.0 1540.9,748.5 1549.8,783.8 1552.0,810.4" stroke="#ffef9e" stroke-width="3.0"/>
<polyline points="1248.9,594.0 1281.0,644.5 1285.4,663.3 1299.8,686.5 1301.3,714.2 1308.6,726.3 1311.9,752.9 1320.8,769.5 1340.7,778.3 1386.7,810.4" stroke="#ffef9e" stroke-width="3.0"/>
<polyline points="1248.9,529.0 1283.2,542.3 1309.7,554.9 1347.3,567.5 1352.9,567.0 1356.2,556.0 1368.4,538.3 1369.5,523.9" stroke="#bcbcbc" stroke-width="1.6" stroke-dasharray="1.8 1.15"/>
<polyline points="1370.6,526.1 1378.3,528.3 1404.9,531.6 1455.8,535.0 1471.2,533.4 1481.9,523.9" stroke="#bcbcbc" stroke-width="1.6" stroke-dasharray="1.8 1.15"/>
<polyline points="1370.6,526.1 1377.2,531.6 1402.7,547.1 1409.3,561.5 1511.1,606.9 1526.5,616.8 1542.0,642.3 1556.4,668.8 1556.4,677.7 1542.0,713.1 1538.7,733.0 1540.9,748.5 1549.8,783.8 1552.0,810.4" stroke="#bcbcbc" stroke-width="1.6" stroke-dasharray="1.8 1.15"/>
<polyline points="1248.9,594.0 1281.0,644.5 1285.4,663.3 1299.8,686.5 1301.3,714.2 1308.6,726.3 1311.9,752.9 1320.8,769.5 1340.7,778.3 1386.7,810.4" stroke="#bcbcbc" stroke-width="1.6" stroke-dasharray="1.8 1.15"/>
</g>
<g clip-path="url(#cC1)" fill="none" stroke-linejoin="round">
<polyline points="539.4,808.9 546.0,832.1 551.5,849.8 561.5,855.4 571.5,864.9 592.5,874.2 611.3,887.4 627.9,891.9 636.7,899.6 653.3,921.7 667.7,930.6 685.4,939.4 699.8,953.8 716.4,962.7 749.6,984.8 771.7,1004.2 818.1,1018.0 851.3,1009.8" stroke="#ffef9e" stroke-width="3.0"/>
<polyline points="818.1,1018.0 821.5,1023.5 851.3,1045.2" stroke="#ffef9e" stroke-width="3.0"/>
<polyline points="822.1,914.0 834.7,933.9 846.9,962.7 851.3,966.6" stroke="#ffef9e" stroke-width="3.0"/>
<polyline points="429.9,808.9 428.3,821.1 422.1,832.1 414.4,838.8 408.8,841.0 398.9,839.9" stroke="#ffef9e" stroke-width="3.0"/>
<polyline points="416.6,834.8 408.8,847.6 404.9,863.1 405.5,868.6 413.3,883.0 426.5,911.8 433.2,919.5 447.6,928.4 466.4,939.4 476.3,948.9" stroke="#ffef9e" stroke-width="3.0"/>
<polyline points="426.5,913.5 413.3,917.3 398.9,921.9" stroke="#ffef9e" stroke-width="3.0"/>
<polyline points="400.0,843.2 403.3,860.9 404.9,865.3" stroke="#ffef9e" stroke-width="3.0"/>
<polyline points="539.4,808.9 546.0,832.1 551.5,849.8 561.5,855.4 571.5,864.9 592.5,874.2 611.3,887.4 627.9,891.9 636.7,899.6 653.3,921.7 667.7,930.6 685.4,939.4 699.8,953.8 716.4,962.7 749.6,984.8 771.7,1004.2 818.1,1018.0 851.3,1009.8" stroke="#bcbcbc" stroke-width="1.6" stroke-dasharray="1.8 1.15"/>
<polyline points="818.1,1018.0 821.5,1023.5 851.3,1045.2" stroke="#bcbcbc" stroke-width="1.6" stroke-dasharray="1.8 1.15"/>
<polyline points="822.1,914.0 834.7,933.9 846.9,962.7 851.3,966.6" stroke="#bcbcbc" stroke-width="1.6" stroke-dasharray="1.8 1.15"/>
<polyline points="429.9,808.9 428.3,821.1 422.1,832.1 414.4,838.8 408.8,841.0 398.9,839.9" stroke="#bcbcbc" stroke-width="1.6" stroke-dasharray="1.8 1.15"/>
<polyline points="416.6,834.8 408.8,847.6 404.9,863.1 405.5,868.6 413.3,883.0 426.5,911.8 433.2,919.5 447.6,928.4 466.4,939.4 476.3,948.9" stroke="#bcbcbc" stroke-width="1.6" stroke-dasharray="1.8 1.15"/>
<polyline points="426.5,913.5 413.3,917.3 398.9,921.9" stroke="#bcbcbc" stroke-width="1.6" stroke-dasharray="1.8 1.15"/>
<polyline points="400.0,843.2 403.3,860.9 404.9,865.3" stroke="#bcbcbc" stroke-width="1.6" stroke-dasharray="1.8 1.15"/>
</g>
<g clip-path="url(#cC2)" fill="none" stroke-linejoin="round">
<polyline points="1236.1,808.9 1233.8,832.1 1231.6,863.1 1223.9,951.6 1217.3,1020.2 1211.7,1095.4" stroke="#ffef9e" stroke-width="3.0"/>
<polyline points="1235.0,822.8 1301.3,834.1" stroke="#ffef9e" stroke-width="3.0"/>
<polyline points="1232.3,862.4 1301.3,873.3" stroke="#ffef9e" stroke-width="3.0"/>
<polyline points="848.9,1044.1 863.3,1056.7 883.2,1066.6 898.7,1068.8 921.9,1061.8 934.1,1070.6 979.0,1095.4" stroke="#ffef9e" stroke-width="3.0"/>
<polyline points="1301.3,1064.0 1270.4,1081.0 1261.5,1092.1 1258.2,1095.4" stroke="#ffef9e" stroke-width="3.0"/>
<polyline points="848.9,964.9 854.0,969.7 857.1,981.5 856.6,998.1 854.0,1006.9 848.9,1011.3" stroke="#ffef9e" stroke-width="3.0"/>
<polyline points="1236.1,808.9 1233.8,832.1 1231.6,863.1 1223.9,951.6 1217.3,1020.2 1211.7,1095.4" stroke="#bcbcbc" stroke-width="1.6" stroke-dasharray="1.8 1.15"/>
<polyline points="1235.0,822.8 1301.3,834.1" stroke="#bcbcbc" stroke-width="1.6" stroke-dasharray="1.8 1.15"/>
<polyline points="1232.3,862.4 1301.3,873.3" stroke="#bcbcbc" stroke-width="1.6" stroke-dasharray="1.8 1.15"/>
<polyline points="848.9,1044.1 863.3,1056.7 883.2,1066.6 898.7,1068.8 921.9,1061.8 934.1,1070.6 979.0,1095.4" stroke="#bcbcbc" stroke-width="1.6" stroke-dasharray="1.8 1.15"/>
<polyline points="1301.3,1064.0 1270.4,1081.0 1261.5,1092.1 1258.2,1095.4" stroke="#bcbcbc" stroke-width="1.6" stroke-dasharray="1.8 1.15"/>
<polyline points="848.9,964.9 854.0,969.7 857.1,981.5 856.6,998.1 854.0,1006.9 848.9,1011.3" stroke="#bcbcbc" stroke-width="1.6" stroke-dasharray="1.8 1.15"/>
</g>
<g clip-path="url(#cC3)" fill="none" stroke-linejoin="round">
<polyline points="1248.9,824.8 1356.2,844.3 1363.3,858.7 1364.6,867.5 1361.7,884.1" stroke="#ffef9e" stroke-width="3.0"/>
<polyline points="1248.9,864.6 1361.7,883.5 1398.2,889.6 1529.9,911.8 1541.6,912.9" stroke="#ffef9e" stroke-width="3.0"/>
<polyline points="1385.0,808.9 1396.0,818.8 1403.1,832.1 1407.5,854.2 1402.7,874.2 1398.2,889.6 1388.9,915.8 1373.9,933.9 1345.1,980.4 1330.8,1004.7 1313.1,1056.0 1272.1,1078.8 1263.3,1089.9 1256.6,1095.4" stroke="#ffef9e" stroke-width="3.0"/>
<polyline points="1552.0,808.9 1554.2,854.2 1552.0,874.2 1542.0,911.8 1538.7,929.5 1536.5,940.5 1513.3,991.4 1506.6,1001.4 1479.0,1029.0 1425.9,1096.5" stroke="#ffef9e" stroke-width="3.0"/>
<polyline points="1530.5,912.2 1537.6,927.3" stroke="#ffef9e" stroke-width="3.0"/>
<polyline points="1248.9,824.8 1356.2,844.3 1363.3,858.7 1364.6,867.5 1361.7,884.1" stroke="#bcbcbc" stroke-width="1.6" stroke-dasharray="1.8 1.15"/>
<polyline points="1248.9,864.6 1361.7,883.5 1398.2,889.6 1529.9,911.8 1541.6,912.9" stroke="#bcbcbc" stroke-width="1.6" stroke-dasharray="1.8 1.15"/>
<polyline points="1385.0,808.9 1396.0,818.8 1403.1,832.1 1407.5,854.2 1402.7,874.2 1398.2,889.6 1388.9,915.8 1373.9,933.9 1345.1,980.4 1330.8,1004.7 1313.1,1056.0 1272.1,1078.8 1263.3,1089.9 1256.6,1095.4" stroke="#bcbcbc" stroke-width="1.6" stroke-dasharray="1.8 1.15"/>
<polyline points="1552.0,808.9 1554.2,854.2 1552.0,874.2 1542.0,911.8 1538.7,929.5 1536.5,940.5 1513.3,991.4 1506.6,1001.4 1479.0,1029.0 1425.9,1096.5" stroke="#bcbcbc" stroke-width="1.6" stroke-dasharray="1.8 1.15"/>
<polyline points="1530.5,912.2 1537.6,927.3" stroke="#bcbcbc" stroke-width="1.6" stroke-dasharray="1.8 1.15"/>
</g>
<g clip-path="url(#cD1)" fill="none" stroke-linejoin="round">
<polyline points="398.9,1139.0 536.1,1176.4" stroke="#ffef9e" stroke-width="3.0"/>
<polyline points="398.9,1139.0 536.1,1176.4" stroke="#bcbcbc" stroke-width="1.6" stroke-dasharray="1.8 1.15"/>
</g>
<g clip-path="url(#cD2)" fill="none" stroke-linejoin="round">
<polyline points="977.2,1094.1 1033.6,1125.1 1101.1,1177.1" stroke="#ffef9e" stroke-width="3.0"/>
<polyline points="1211.9,1093.0 1207.3,1129.5 1205.1,1155.0 1204.0,1177.1" stroke="#ffef9e" stroke-width="3.0"/>
<polyline points="1262.6,1090.8 1247.1,1103.0 1246.0,1118.5 1247.8,1133.9 1244.9,1147.2 1246.0,1151.6 1289.2,1176.6" stroke="#ffef9e" stroke-width="3.0"/>
<polyline points="1207.3,1130.0 1235.0,1145.0 1244.9,1147.2" stroke="#ffef9e" stroke-width="3.0"/>
<polyline points="1205.1,1155.6 1167.5,1176.6" stroke="#ffef9e" stroke-width="3.0"/>
<polyline points="977.2,1094.1 1033.6,1125.1 1101.1,1177.1" stroke="#bcbcbc" stroke-width="1.6" stroke-dasharray="1.8 1.15"/>
<polyline points="1211.9,1093.0 1207.3,1129.5 1205.1,1155.0 1204.0,1177.1" stroke="#bcbcbc" stroke-width="1.6" stroke-dasharray="1.8 1.15"/>
<polyline points="1262.6,1090.8 1247.1,1103.0 1246.0,1118.5 1247.8,1133.9 1244.9,1147.2 1246.0,1151.6 1289.2,1176.6" stroke="#bcbcbc" stroke-width="1.6" stroke-dasharray="1.8 1.15"/>
<polyline points="1207.3,1130.0 1235.0,1145.0 1244.9,1147.2" stroke="#bcbcbc" stroke-width="1.6" stroke-dasharray="1.8 1.15"/>
<polyline points="1205.1,1155.6 1167.5,1176.6" stroke="#bcbcbc" stroke-width="1.6" stroke-dasharray="1.8 1.15"/>
</g>
<g clip-path="url(#cD3)" fill="none" stroke-linejoin="round">
<polyline points="1480.1,1027.7 1431.4,1087.5 1385.0,1148.3 1352.9,1177.1" stroke="#ffef9e" stroke-width="3.0"/>
<polyline points="1314.2,1055.4 1272.1,1078.6 1263.3,1089.7 1248.9,1103.6" stroke="#ffef9e" stroke-width="3.0"/>
<polyline points="1248.9,1152.1 1289.8,1176.6" stroke="#ffef9e" stroke-width="3.0"/>
<polyline points="1480.1,1027.7 1431.4,1087.5 1385.0,1148.3 1352.9,1177.1" stroke="#bcbcbc" stroke-width="1.6" stroke-dasharray="1.8 1.15"/>
<polyline points="1314.2,1055.4 1272.1,1078.6 1263.3,1089.7 1248.9,1103.6" stroke="#bcbcbc" stroke-width="1.6" stroke-dasharray="1.8 1.15"/>
<polyline points="1248.9,1152.1 1289.8,1176.6" stroke="#bcbcbc" stroke-width="1.6" stroke-dasharray="1.8 1.15"/>
</g>
<polygon points="978.3,348.0 981.6,335.1 988.3,328.1 994.9,325.2 1008.2,325.2 1017.0,329.6 1021.5,337.3 1022.6,345.8 1017.0,352.8 1008.2,357.3 994.9,357.9 985.0,353.9" fill="url(#pw)" stroke="#2a3448" stroke-width="0.9" stroke-linejoin="round"/>
<polygon points="1096.7,510.4 1101.1,504.4 1111.1,503.3 1118.8,504.4 1133.2,511.7 1149.8,514.4 1168.6,523.2 1190.7,525.0 1212.8,537.2 1232.7,542.7 1233.8,547.1 1202.9,587.6 1184.1,590.7 1164.2,589.8 1148.7,588.5 1135.4,582.5 1125.9,584.3 1130.5,574.8 1132.1,564.8 1127.7,547.1 1122.1,531.6 1113.3,525.0 1100.0,517.3" fill="url(#pw)" stroke="#2a3448" stroke-width="0.9" stroke-linejoin="round"/>
<polygon points="814.8,777.2 815.9,766.6 830.3,753.5 839.2,753.3 846.9,756.9 849.1,768.4 850.4,779.9" fill="url(#pw)" stroke="#2a3448" stroke-width="0.9" stroke-linejoin="round"/>
<polygon points="397.8,876.8 404.9,877.5 425.9,912.2 422.1,915.1 397.8,919.3" fill="url(#pw)" stroke="#2a3448" stroke-width="0.9" stroke-linejoin="round"/>
<polygon points="836.9,832.8 850.0,852.0 855.5,853.6 879.9,875.7 872.1,883.0 850.0,888.5 839.8,890.8 839.2,878.6 840.7,874.2 835.8,849.8" fill="url(#pw)" stroke="#2a3448" stroke-width="0.9" stroke-linejoin="round"/>
<polygon points="866.6,978.1 871.7,970.4 875.4,972.6 896.9,1004.7 900.4,1025.7 897.6,1034.6 902.0,1040.1 900.4,1051.2 892.0,1056.2 850.0,1033.5 830.3,1020.2 836.7,1016.9 850.0,1011.8 858.8,1009.1 867.3,1004.2 868.1,993.6" fill="url(#pw)" stroke="#2a3448" stroke-width="0.9" stroke-linejoin="round"/>
<ellipse cx="1439.6" cy="490.0" rx="12.4" ry="10.6" fill="url(#pw)" stroke="#2a3448" stroke-width="0.9"/>
<ellipse cx="427.7" cy="780.5" rx="3.5" ry="3.3" fill="url(#pw)" stroke="#2a3448" stroke-width="0.9"/>
<ellipse cx="425.2" cy="790.0" rx="4.0" ry="4.0" fill="url(#pw)" stroke="#2a3448" stroke-width="0.9"/>
<polygon points="421.5,731.6 424.8,730.3 426.5,734.7 423.2,736.1" fill="#5fa8a0" stroke="#1c3c3a" stroke-width="0.8"/>
<polygon points="431.0,741.2 434.7,740.9 435.0,744.7 431.2,744.9" fill="#5fa8a0" stroke="#1c3c3a" stroke-width="0.8"/>
<polygon points="433.2,750.2 436.3,750.4 435.6,754.4 432.5,754.0" fill="#5fa8a0" stroke="#1c3c3a" stroke-width="0.8"/>
<polygon points="432.7,759.5 436.3,759.7 435.6,764.2 432.3,763.7" fill="#5fa8a0" stroke="#1c3c3a" stroke-width="0.8"/>
<polygon points="401.1,821.1 404.9,820.0 407.1,822.2 403.3,830.4 399.6,828.8" fill="#5fa8a0" stroke="#1c3c3a" stroke-width="0.8"/>
<polygon points="413.7,823.7 422.1,821.5 423.9,827.3 421.7,829.9 414.4,827.7" fill="#5fa8a0" stroke="#1c3c3a" stroke-width="0.8"/>
<polygon points="421.0,818.4 422.8,817.3 423.9,819.3 421.7,821.1" fill="#5fa8a0" stroke="#1c3c3a" stroke-width="0.8"/>
<polygon points="475.2,938.3 480.8,939.4 483.6,942.7 480.8,946.7 477.9,945.4 477.4,943.6 475.7,944.1 474.1,942.7" fill="#5fa8a0" stroke="#1c3c3a" stroke-width="0.8"/>
<polygon points="1323.0,1168.7 1329.6,1172.7 1326.3,1177.1 1316.4,1177.1" fill="#5fa8a0" stroke="#1c3c3a" stroke-width="0.8"/>
<path d="M400.5 1177V166H1977" fill="none" stroke="#9a9a9a" stroke-width="1" opacity="0"/><path d="M400.5 1177V166" stroke="#949494" stroke-width="1"/><path d="M400 1176.5H1977" stroke="#b4b4b4" stroke-width="1"/>
</svg>
<div style="position:absolute;left:399px;top:165px;width:1578px;height:1px;background:#949494"></div><div style="position:absolute;left:399px;top:166px;width:1px;height:1011px;background:#a6a6a6"></div>
</body></html>
